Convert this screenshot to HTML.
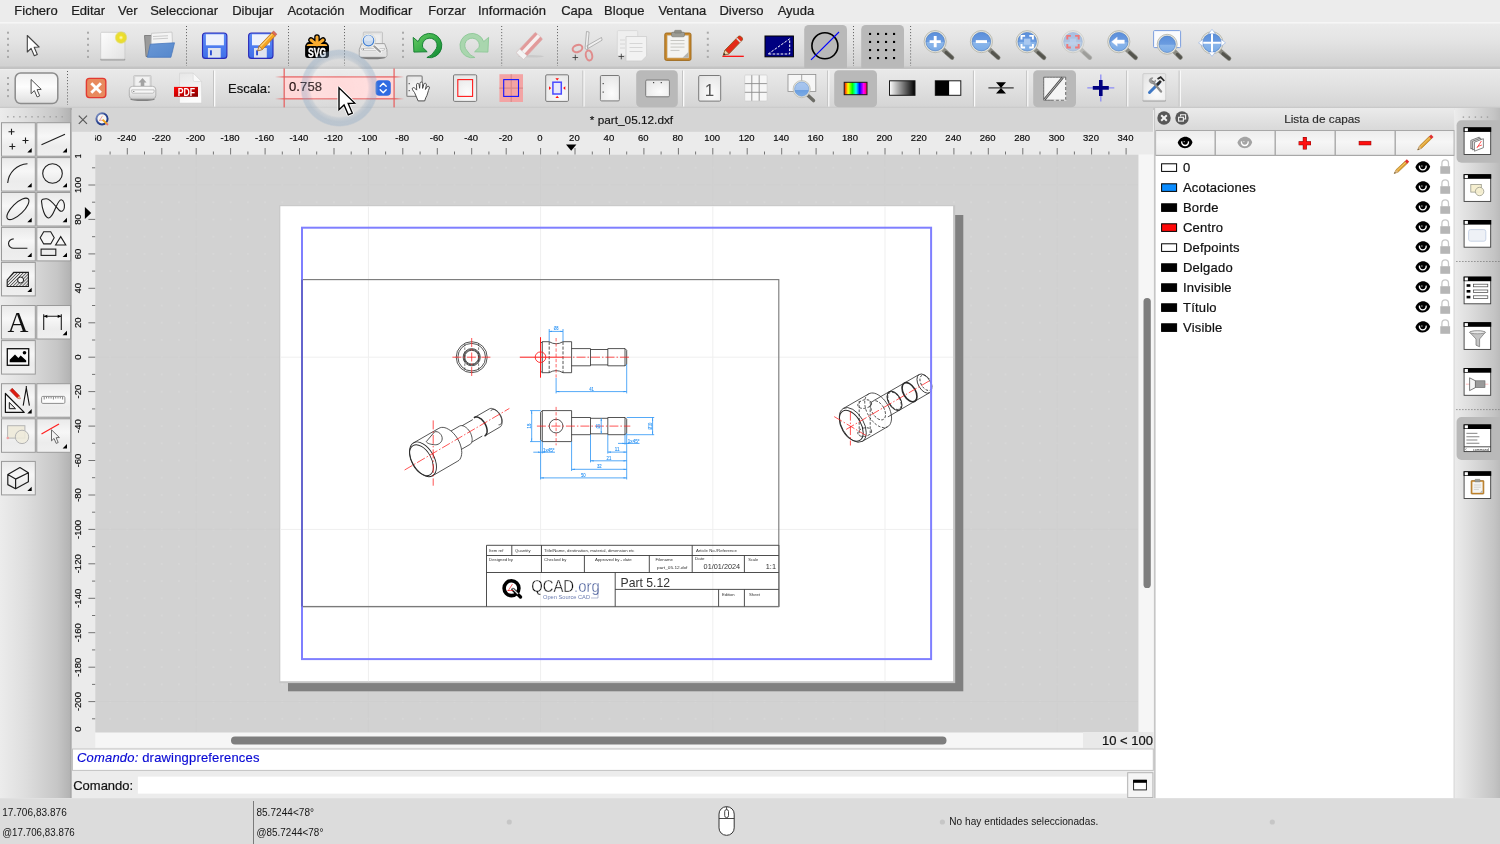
<!DOCTYPE html>
<html lang="es"><head><meta charset="utf-8"><title>QCAD - part_05.12.dxf</title>
<style>
html,body{margin:0;padding:0}
body{width:1500px;height:844px;position:relative;overflow:hidden;background:#ececec;font-family:"Liberation Sans","DejaVu Sans",sans-serif;color:#000;font-size:13px}
.abs{position:absolute}
svg{position:absolute;overflow:visible}
#menubar{position:absolute;left:0;top:0;width:1500px;height:22px;background:#ececec}
#menubar span{position:absolute;top:3px;font-size:13px;line-height:16px;color:#1e1e1e;white-space:nowrap;-webkit-text-stroke:0.22px #1e1e1e}
#tb1{position:absolute;left:0;top:22px;width:1500px;height:46px;background:linear-gradient(#ebebeb,#e4e4e4 40%,#d0d0d0)}
#tb2{position:absolute;left:0;top:68px;width:1500px;height:40px;background:linear-gradient(#f1f1f1,#e9e9e9 1.5px,#e2e2e2 40%,#d4d4d4);border-top:1px solid #c3c3c3;box-sizing:border-box}

#menubar,svg{will-change:transform}

</style></head>
<body>
<!-- menubar -->
<div id="menubar"><span style="left:14.3px">Fichero</span><span style="left:71.2px">Editar</span><span style="left:118.0px">Ver</span><span style="left:150.2px">Seleccionar</span><span style="left:232.2px">Dibujar</span><span style="left:287.4px">Acotación</span><span style="left:359.6px">Modificar</span><span style="left:428.2px">Forzar</span><span style="left:478.0px">Información</span><span style="left:561.2px">Capa</span><span style="left:604.1px">Bloque</span><span style="left:658.4px">Ventana</span><span style="left:719.4px">Diverso</span><span style="left:777.7px">Ayuda</span></div>
<!-- toolbar1 -->
<div id="tb1"></div><svg width="1500" height="68" viewBox="0 0 1500 68" style="left:0;top:0" font-family="'Liberation Sans',sans-serif"><defs><linearGradient id="lensg" x1="0" y1="0" x2="0" y2="1"><stop offset="0" stop-color="#5b8fdb"/><stop offset="0.5" stop-color="#6b9ce0"/><stop offset="0.55" stop-color="#8bb6ea"/><stop offset="1" stop-color="#79aae6"/></linearGradient><linearGradient id="paperg" x1="0" y1="0" x2="1" y2="1"><stop offset="0" stop-color="#fdfdfd"/><stop offset="1" stop-color="#e3e3e3"/></linearGradient><radialGradient id="glow"><stop offset="0" stop-color="#fffbd0"/><stop offset="0.35" stop-color="#f0e020"/><stop offset="0.75" stop-color="#e4d820" stop-opacity="0.85"/><stop offset="1" stop-color="#e4d820" stop-opacity="0"/></radialGradient><linearGradient id="bluef" x1="0" y1="0" x2="1" y2="1"><stop offset="0" stop-color="#6a98d6"/><stop offset="1" stop-color="#5587cc"/></linearGradient><linearGradient id="saveg" x1="0" y1="0" x2="0" y2="1"><stop offset="0" stop-color="#5f8cf8"/><stop offset="1" stop-color="#3f6fe8"/></linearGradient><linearGradient id="greeng" x1="0" y1="0" x2="1" y2="1"><stop offset="0" stop-color="#6ccc66"/><stop offset="0.5" stop-color="#36ac48"/><stop offset="1" stop-color="#108a34"/></linearGradient><filter id="nf1" x="-0.1" y="-0.1" width="1.2" height="1.2"><feOffset dx="0" dy="0"/></filter></defs><rect x="0" y="22" width="1500" height="1.6" fill="#f6f6f6"/><rect x="0" y="66.6" width="1500" height="1.4" fill="#c4c4c4"/><rect x="7.0" y="31.7" width="2" height="2" fill="#a9a9a9"/><rect x="7.0" y="37.8" width="2" height="2" fill="#a9a9a9"/><rect x="7.0" y="43.8" width="2" height="2" fill="#a9a9a9"/><rect x="7.0" y="49.9" width="2" height="2" fill="#a9a9a9"/><rect x="7.0" y="55.9" width="2" height="2" fill="#a9a9a9"/><rect x="87.0" y="31.7" width="2" height="2" fill="#a9a9a9"/><rect x="87.0" y="37.8" width="2" height="2" fill="#a9a9a9"/><rect x="87.0" y="43.8" width="2" height="2" fill="#a9a9a9"/><rect x="87.0" y="49.9" width="2" height="2" fill="#a9a9a9"/><rect x="87.0" y="55.9" width="2" height="2" fill="#a9a9a9"/><rect x="402.0" y="31.7" width="2" height="2" fill="#a9a9a9"/><rect x="402.0" y="37.8" width="2" height="2" fill="#a9a9a9"/><rect x="402.0" y="43.8" width="2" height="2" fill="#a9a9a9"/><rect x="402.0" y="49.9" width="2" height="2" fill="#a9a9a9"/><rect x="402.0" y="55.9" width="2" height="2" fill="#a9a9a9"/><rect x="706.8" y="31.7" width="2" height="2" fill="#a9a9a9"/><rect x="706.8" y="37.8" width="2" height="2" fill="#a9a9a9"/><rect x="706.8" y="43.8" width="2" height="2" fill="#a9a9a9"/><rect x="706.8" y="49.9" width="2" height="2" fill="#a9a9a9"/><rect x="706.8" y="55.9" width="2" height="2" fill="#a9a9a9"/><path d="M186.5 26.0V66.0" stroke="#5a5a5a" stroke-width="1" stroke-dasharray="1 2.05" fill="none"/><path d="M288.5 26.0V66.0" stroke="#5a5a5a" stroke-width="1" stroke-dasharray="1 2.05" fill="none"/><path d="M344.5 26.0V66.0" stroke="#5a5a5a" stroke-width="1" stroke-dasharray="1 2.05" fill="none"/><path d="M501.7 26.0V66.0" stroke="#5a5a5a" stroke-width="1" stroke-dasharray="1 2.05" fill="none"/><path d="M557.5 26.0V66.0" stroke="#5a5a5a" stroke-width="1" stroke-dasharray="1 2.05" fill="none"/><path d="M853.5 26.0V66.0" stroke="#5a5a5a" stroke-width="1" stroke-dasharray="1 2.05" fill="none"/><path d="M910.6 26.0V66.0" stroke="#5a5a5a" stroke-width="1" stroke-dasharray="1 2.05" fill="none"/><path transform="translate(27.3 35.5) scale(1.000)" d="M0 0V16.5L3.8 12.9L7 20.3L10 19L6.9 11.8L11.8 11.5z" fill="#fff" stroke="#444" stroke-width="1.10" stroke-linejoin="round"/><rect x="100.3" y="58.6" width="25" height="1.8" rx="0.9" fill="#9a9a9a"/><rect x="100.7" y="32.3" width="24.2" height="26.8" rx="1" fill="url(#paperg)" stroke="#c9c9c9" stroke-width="0.8"/><circle cx="121" cy="37.6" r="6.6" fill="url(#glow)"/><path d="M144.5 35.5h7l1.5 2h16v19h-23z" fill="#9a9a9a" stroke="#707070" stroke-width="0.8"/><path d="M151.5 33.3l20.5-1.2 0.8 20-22 2z" fill="#f4f4f4" stroke="#bdbdbd" stroke-width="0.7"/><path d="M153 36.5l15-0.8M153 39l15-0.8" stroke="#c9c9c9" stroke-width="1.1"/><path d="M150.3 44.2l24.2-1.4-3.6 14.5h-23.6z" fill="url(#bluef)" stroke="#4a78bd" stroke-width="0.8" stroke-linejoin="round"/><rect x="202.5" y="33" width="24.4" height="25.4" rx="3" fill="url(#saveg)" stroke="#2b2bb8" stroke-width="1.1"/><rect x="205.9" y="34.3" width="18" height="11" fill="#eef2fc"/><rect x="207.9" y="48" width="12.8" height="9.6" fill="#dfe3ee"/><rect x="210.1" y="50.3" width="1.7" height="5" fill="#1c3fd0"/><rect x="248.6" y="33" width="24.4" height="25.4" rx="3" fill="url(#saveg)" stroke="#2b2bb8" stroke-width="1.1"/><rect x="252.0" y="34.3" width="18" height="11" fill="#eef2fc"/><rect x="254.0" y="48" width="12.8" height="9.6" fill="#dfe3ee"/><rect x="256.2" y="50.3" width="1.7" height="5" fill="#1c3fd0"/><path d="M257.8 50.8l1.2-4.6 13-13.6 3.4 3.2-13 13.8z" fill="#f6a421" stroke="#b86a10" stroke-width="0.7" stroke-linejoin="round"/><path d="M260.5 46.5l11.8-12.4" stroke="#fbd27a" stroke-width="1.1"/><path d="M272 32.6l1.6-1.6 3.3 3.2-1.5 1.6z" fill="#e06a5a" stroke="#a8483c" stroke-width="0.5"/><path d="M257.8 50.8l1.2-4.6 3.4 3.2z" fill="#f3dcb4" stroke="#8a5a20" stroke-width="0.5"/><rect x="305.100" y="43.400" width="23.900" height="14.500" rx="3" fill="#000"/><path d="M317 44.800V37M317 44.800L311 40M317 44.800L323 40M309 44.900H325" stroke="#000" stroke-width="5.600" stroke-linecap="round" fill="none"/><path d="M317 44.800V37M317 44.800L311 40M317 44.800L323 40" stroke="#f9ab2e" stroke-width="3" stroke-linecap="round" fill="none"/><path d="M306.600 45.900q0.300-1.800 2.400-1.800h16q2.100 0 2.400 1.800z" fill="#f9ab2e"/><text x="317.100" y="56.900" font-size="13.600" font-weight="bold" fill="#fff" stroke="#fff" stroke-width="0.400" text-anchor="middle" textLength="18.200" lengthAdjust="spacingAndGlyphs" filter="url(#nf1)">SVG</text><ellipse cx="373" cy="57.500" rx="12.600" ry="1.700" fill="#6e6e6e" opacity="0.850"/><rect x="363.300" y="32.100" width="19.200" height="13.500" rx="0.800" fill="#e2e2e2" stroke="#bcbcbc" stroke-width="0.800"/><rect x="372" y="34.500" width="8.500" height="9" fill="#ededed"/><path d="M361.600 43.600H384.600L386.900 49.500V55.400Q386.900 57 385.300 57H360.900Q359.300 57 359.300 55.400V49.500z" fill="#ececec" stroke="#9a9a9a" stroke-width="0.900" stroke-linejoin="round"/><path d="M361.300 48.600H385Q385 50.400 383 50.400H363.300Q361.300 50.400 361.300 48.600z" fill="#fbfbfb" stroke="#a9a9a9" stroke-width="0.600"/><rect x="359.800" y="51.300" width="26.600" height="5.300" rx="1" fill="#e3e3e3"/><rect x="363" y="48.700" width="1" height="1" fill="#666"/><path d="M373.200 45.300l7 6.400" stroke="#fafafa" stroke-width="3.600" stroke-linecap="round"/><path d="M374.200 46.300l6 5.400" stroke="#9c9c9c" stroke-width="2" stroke-linecap="round"/><circle cx="368.500" cy="40.600" r="7" fill="#f8f8f4" stroke="#c4c4bc" stroke-width="0.600"/><circle cx="368.500" cy="40.600" r="5.300" fill="#c8d9ee" stroke="#3f7dd2" stroke-width="1.100"/><path d="M363.800 40a4.700 4.700 0 0 1 9.400 0c-3 1.200-6.400 1.200-9.400 0z" fill="#dbe6f4"/><path d="M413.200 37.400L413.900 52.100L427.200 51.800L422.700 47.400A7.300 7.300 0 1 1 434.800 50.700Q432.500 55.500 426.900 57.500A12.200 12.200 0 1 0 418.100 41.600z" fill="url(#greeng)" stroke="#0f7a2c" stroke-width="0.900" stroke-linejoin="round"/><path transform="translate(901.800 0) scale(-1 1)" d="M413.200 37.400L413.900 52.100L427.200 51.800L422.700 47.400A7.300 7.300 0 1 1 434.800 50.700Q432.500 55.500 426.900 57.500A12.200 12.200 0 1 0 418.100 41.600z" fill="#a9d6ae" stroke="#8cc796" stroke-width="0.900" stroke-linejoin="round"/><ellipse cx="531" cy="56.3" rx="13" ry="1.3" fill="#c9c9c9"/><g transform="rotate(-47 530 45)"><rect x="515" y="40.2" width="28" height="10" rx="1" fill="#e29a9a" stroke="#d9a9a9" stroke-width="0.6"/><rect x="515" y="43.3" width="28" height="3.6" fill="#f6f0f0"/><rect x="515" y="40.2" width="5" height="10" fill="#f4f4f4" stroke="#cfcfcf" stroke-width="0.5"/></g><path d="M586.5 31.5l2.6 0.5-1.6 18-2.4-1.5zM601.5 37.5l0.6 2.7-14 8.2-1.2-2.6z" fill="#f0f0f0" stroke="#9a9a9a" stroke-width="0.7"/><ellipse cx="577.5" cy="48.5" rx="5" ry="3.4" transform="rotate(-20 577.5 48.5)" fill="none" stroke="#e08c8c" stroke-width="2"/><ellipse cx="589" cy="55.5" rx="3.2" ry="5" transform="rotate(-12 589 55.5)" fill="none" stroke="#e08c8c" stroke-width="2"/><path d="M572.5 57.5h5.6M575.3 54.7v5.6" stroke="#333" stroke-width="0.8"/><rect x="617.3" y="30.6" width="20.4" height="25" rx="1" fill="#efefef" stroke="#d4d4d4" stroke-width="0.8"/><path d="M626 36.5h20.6v19.5l-5 5h-15.6z" fill="#f2f2f2" stroke="#cdcdcd" stroke-width="0.8"/><path d="M629.5 43.5h13M629.5 47.5h13M629.5 51.5h13M620 40h5M620 44h5M620 48h5" stroke="#d6d6d6" stroke-width="1"/><path d="M618.5 56.5h5.6M621.3 53.7v5.6" stroke="#333" stroke-width="0.8"/><rect x="664.8" y="33" width="26.2" height="27.4" rx="1.6" fill="#c98a2e" stroke="#9a6417" stroke-width="0.9"/><path d="M667.4 35.6h21v22.2h-21z" fill="#f4f4f2" stroke="#d8d8d4" stroke-width="0.5"/><path d="M682.5 57.8l5.9-5.9v5.9z" fill="#b4b4b0"/><path d="M670.5 40.5h14M670.5 43.8h14M670.5 47.1h14M670.5 50.4h9" stroke="#c6c6c2" stroke-width="1"/><rect x="671.5" y="32.2" width="13" height="4.6" rx="1.4" fill="#9c9c94" stroke="#74746c" stroke-width="0.6"/><rect x="674.5" y="30.3" width="7" height="2.8" rx="1" fill="#8e8e86" stroke="#74746c" stroke-width="0.5"/><path d="M722.4 56.3h21.4" stroke="#ff0000" stroke-width="1.2"/><path d="M723.3 55.2l1.8-5.2 13.2-13.6c1.6-1.5 5.4 1.6 4 3.7l-13.3 13.7z" fill="#e42a18" stroke="#8a4a10" stroke-width="0.8" stroke-linejoin="round"/><path d="M723.3 55.2l1.8-5.2 4 3.8z" fill="#f0d4a8" stroke="#6a4a20" stroke-width="0.5"/><path d="M736.6 38.3l3.9 3.8" stroke="#d9d9d9" stroke-width="1.6"/><path d="M723.3 55.2l0.8-2.2 1.5 1.5z" fill="#222"/><rect x="765" y="36" width="28.4" height="20.8" fill="#000080" stroke="#000" stroke-width="1"/><path d="M768.2 54l21.5-15.2v15.2z" fill="none" stroke="#fff" stroke-width="1" stroke-dasharray="2.6 1.4"/><rect x="804.2" y="25" width="42.8" height="46" rx="4.5" fill="#b9b9b9"/><rect x="861.2" y="25" width="42.8" height="46" rx="4.5" fill="#b9b9b9"/><circle cx="824.9" cy="45.8" r="13" fill="none" stroke="#000" stroke-width="1.6"/><path d="M811 59.8L839 32" stroke="#0000ff" stroke-width="1.1"/><rect x="869.0" y="32.9" width="2.1" height="2.1" fill="#000"/><rect x="869.0" y="40.9" width="2.1" height="2.1" fill="#000"/><rect x="869.0" y="49.0" width="2.1" height="2.1" fill="#000"/><rect x="869.0" y="57.0" width="2.1" height="2.1" fill="#000"/><rect x="877.0" y="32.9" width="2.1" height="2.1" fill="#000"/><rect x="877.0" y="40.9" width="2.1" height="2.1" fill="#000"/><rect x="877.0" y="49.0" width="2.1" height="2.1" fill="#000"/><rect x="877.0" y="57.0" width="2.1" height="2.1" fill="#000"/><rect x="885.0" y="32.9" width="2.1" height="2.1" fill="#000"/><rect x="885.0" y="40.9" width="2.1" height="2.1" fill="#000"/><rect x="885.0" y="49.0" width="2.1" height="2.1" fill="#000"/><rect x="885.0" y="57.0" width="2.1" height="2.1" fill="#000"/><rect x="893.0" y="32.9" width="2.1" height="2.1" fill="#000"/><rect x="893.0" y="40.9" width="2.1" height="2.1" fill="#000"/><rect x="893.0" y="49.0" width="2.1" height="2.1" fill="#000"/><rect x="893.0" y="57.0" width="2.1" height="2.1" fill="#000"/><g opacity="1.0"><path d="M942.6 49.0L952.0 57.6" stroke="#8a8a82" stroke-width="4.6" stroke-linecap="round"/><path d="M946.1 52.5L952.0 57.6" stroke="#55554e" stroke-width="3.2" stroke-linecap="round"/><circle cx="935.2" cy="41.6" r="11.1" fill="#e6e6de" stroke="#b0b0a6" stroke-width="0.8"/><circle cx="935.2" cy="41.6" r="9.3" fill="url(#lensg)" stroke="#4477c0" stroke-width="0.6"/></g><path d="M929.6 41.6h11.2M935.2 36v11.2" stroke="#fff" stroke-width="2.9"/><g opacity="1.0"><path d="M988.8 49.0L998.2 57.6" stroke="#8a8a82" stroke-width="4.6" stroke-linecap="round"/><path d="M992.3 52.5L998.2 57.6" stroke="#55554e" stroke-width="3.2" stroke-linecap="round"/><circle cx="981.4" cy="41.6" r="11.1" fill="#e6e6de" stroke="#b0b0a6" stroke-width="0.8"/><circle cx="981.4" cy="41.6" r="9.3" fill="url(#lensg)" stroke="#4477c0" stroke-width="0.6"/></g><path d="M975.8 41.6h11.2" stroke="#fff" stroke-width="2.9"/><g opacity="1.0"><path d="M1034.6 49.1L1044.0 57.7" stroke="#8a8a82" stroke-width="4.6" stroke-linecap="round"/><path d="M1038.1 52.6L1044.0 57.7" stroke="#55554e" stroke-width="3.2" stroke-linecap="round"/><circle cx="1027.2" cy="41.7" r="11.1" fill="#e6e6de" stroke="#b0b0a6" stroke-width="0.8"/><circle cx="1027.2" cy="41.7" r="9.3" fill="url(#lensg)" stroke="#4477c0" stroke-width="0.6"/></g><path d="M1021.5 39.5v-3.6h3.6M1029.3 35.9h3.6v3.6M1032.9 43.9v3.6h-3.6M1025.1 47.5h-3.6v-3.6" stroke="#fff" stroke-width="1.9" fill="none"/><rect x="1024" y="38.6" width="6.4" height="6.2" fill="#a9c8f0"/><g opacity="0.45"><path d="M1080.4 49.1L1089.8 57.7" stroke="#8a8a82" stroke-width="4.6" stroke-linecap="round"/><path d="M1083.9 52.6L1089.8 57.7" stroke="#55554e" stroke-width="3.2" stroke-linecap="round"/><circle cx="1073.0" cy="41.7" r="11.1" fill="#e6e6de" stroke="#b0b0a6" stroke-width="0.8"/><circle cx="1073.0" cy="41.7" r="9.3" fill="url(#lensg)" stroke="#4477c0" stroke-width="0.6"/></g><path d="M1067.3 39.5v-3.6h3.6M1075.1 35.9h3.6v3.6M1078.7 43.9v3.6h-3.6M1070.9 47.5h-3.6v-3.6" stroke="#f07878" stroke-width="1.9" fill="none"/><rect x="1069.8" y="38.6" width="6.4" height="6.2" fill="#bdd2ee" opacity="0.7"/><g opacity="1.0"><path d="M1126.2 49.1L1135.6 57.7" stroke="#8a8a82" stroke-width="4.6" stroke-linecap="round"/><path d="M1129.7 52.6L1135.6 57.7" stroke="#55554e" stroke-width="3.2" stroke-linecap="round"/><circle cx="1118.8" cy="41.7" r="11.1" fill="#e6e6de" stroke="#b0b0a6" stroke-width="0.8"/><circle cx="1118.8" cy="41.7" r="9.3" fill="url(#lensg)" stroke="#4477c0" stroke-width="0.6"/></g><path d="M1111.6 41.7l5.6-4.6v2.8h7.2v3.6h-7.2v2.8z" fill="#fff" stroke="#e8eefc" stroke-width="0.4"/><rect x="1153.6" y="30.6" width="27" height="17" rx="1" fill="#fbfbfd" stroke="#6f95dc" stroke-width="0.9"/><g opacity="1.0"><path d="M1173.8 50.9L1180.5 57.5" stroke="#8a8a82" stroke-width="4.6" stroke-linecap="round"/><path d="M1177.3 54.4L1180.5 57.5" stroke="#55554e" stroke-width="3.2" stroke-linecap="round"/><circle cx="1167.2" cy="44.3" r="10.0" fill="#e6e6de" stroke="#b0b0a6" stroke-width="0.8"/><circle cx="1167.2" cy="44.3" r="8.2" fill="url(#lensg)" stroke="#4477c0" stroke-width="0.6"/></g><g opacity="1.0"><path d="M1219.4 50.2L1229.0 58.5" stroke="#8a8a82" stroke-width="4.6" stroke-linecap="round"/><path d="M1222.9 53.7L1229.0 58.5" stroke="#55554e" stroke-width="3.2" stroke-linecap="round"/><circle cx="1212.0" cy="42.8" r="11.1" fill="#e6e6de" stroke="#b0b0a6" stroke-width="0.8"/><circle cx="1212.0" cy="42.8" r="9.3" fill="url(#lensg)" stroke="#4477c0" stroke-width="0.6"/></g><path d="M1212 31v23.6M1200.2 42.8h23.6" stroke="#fff" stroke-width="2"/><path d="M1212 29.3l3.4 4.4h-6.8zM1212 56.3l3.4-4.4h-6.8zM1198.5 42.8l4.4-3.4v6.8zM1225.5 42.8l-4.4-3.4v6.8z" fill="#fff" stroke="#7da2e0" stroke-width="0.5"/></svg>
<!-- toolbar2 -->
<div id="tb2"></div><svg width="1500" height="44" viewBox="0 66 1500 44" style="left:0;top:66px" font-family="'Liberation Sans',sans-serif"><defs><radialGradient id="pg2" cx="0.6" cy="0.7" r="0.9"><stop offset="0" stop-color="#fcfcfc"/><stop offset="1" stop-color="#e2e2e2"/></radialGradient><linearGradient id="btng" x1="0" y1="0" x2="0" y2="1"><stop offset="0" stop-color="#f0f0f0"/><stop offset="0.45" stop-color="#fdfdfd"/><stop offset="1" stop-color="#dedede"/></linearGradient><linearGradient id="rainbow" x1="0" y1="0" x2="1" y2="0"><stop offset="0" stop-color="#ff0000"/><stop offset="0.17" stop-color="#ffff00"/><stop offset="0.36" stop-color="#00ff00"/><stop offset="0.52" stop-color="#00ffff"/><stop offset="0.68" stop-color="#0000ff"/><stop offset="0.85" stop-color="#ff00ff"/><stop offset="1" stop-color="#ff0040"/></linearGradient><linearGradient id="grayg" x1="0" y1="0" x2="1" y2="0"><stop offset="0" stop-color="#fff"/><stop offset="1" stop-color="#000"/></linearGradient><linearGradient id="pdfg" x1="0" y1="0" x2="0" y2="1"><stop offset="0" stop-color="#e01010"/><stop offset="1" stop-color="#8a0000"/></linearGradient></defs><rect x="0" y="106.8" width="1500" height="3.2" fill="#c9c9c9"/><rect x="7.0" y="77.0" width="2" height="2" fill="#a9a9a9"/><rect x="7.0" y="83.0" width="2" height="2" fill="#a9a9a9"/><rect x="7.0" y="89.1" width="2" height="2" fill="#a9a9a9"/><rect x="7.0" y="95.1" width="2" height="2" fill="#a9a9a9"/><path d="M67.5 71.0V105.0" stroke="#5a5a5a" stroke-width="1" stroke-dasharray="1 2.05" fill="none"/><rect x="15.2" y="73" width="42.6" height="30.6" rx="5.5" fill="url(#btng)" stroke="#8c8c8c" stroke-width="1.5"/><path transform="translate(31.1 79.5) scale(0.860)" d="M0 0V16.5L3.8 12.9L7 20.3L10 19L6.9 11.8L11.8 11.5z" fill="#fff" stroke="#444" stroke-width="1.10" stroke-linejoin="round"/><rect x="86.4" y="78.4" width="19.4" height="19.2" rx="3" fill="#e88a5e" stroke="#e23a32" stroke-width="1.4"/><path d="M91.3 83.2l9.6 9.6M100.9 83.2l-9.6 9.6" stroke="#fff" stroke-width="2.9"/><defs><linearGradient id="prg" x1="0" y1="0" x2="0" y2="1"><stop offset="0" stop-color="#fbfbfb"/><stop offset="0.550" stop-color="#e9e9e9"/><stop offset="1" stop-color="#cdcdcd"/></linearGradient></defs><ellipse cx="142.500" cy="99.300" rx="12.300" ry="1.700" fill="#808080"/><rect x="133.700" y="75.500" width="17.400" height="12.500" rx="0.800" fill="#d9d9d9" stroke="#bdbdbd" stroke-width="0.700"/><rect x="135.300" y="77" width="14.200" height="10" fill="#f1f1f1"/><path d="M142.500 77.900l4 4.500h-2.200v3.600h-3.600v-3.600h-2.200z" fill="#a2a2a2"/><rect x="129.300" y="86.300" width="26.500" height="12.700" rx="3.400" fill="url(#prg)" stroke="#a4a4a4" stroke-width="0.800"/><path d="M131.700 89.900h22.400v1.700q0 1.600-1.600 1.600h-19.200q-1.600 0-1.600-1.600z" fill="#f7f7f7" stroke="#9c9c9c" stroke-width="0.600"/><rect x="133" y="91" width="1.400" height="0.800" fill="#777"/><defs><linearGradient id="pdfpg" x1="0" y1="0" x2="0.300" y2="1"><stop offset="0" stop-color="#e6e6e6"/><stop offset="1" stop-color="#fcfcfc"/></linearGradient><linearGradient id="pdfg2" x1="0" y1="0" x2="1" y2="1"><stop offset="0" stop-color="#ff0808"/><stop offset="0.500" stop-color="#c80000"/><stop offset="1" stop-color="#7e0000"/></linearGradient></defs><path d="M179.500 73.100h13.700l8.400 8.400v21.600h-22.100z" fill="url(#pdfpg)" stroke="#d2d2d2" stroke-width="0.600"/><path d="M193.200 73.100l8.400 8.400h-7q-1.400 0-1.400-1.400z" fill="#f9f9f9" stroke="#cfcfcf" stroke-width="0.500"/><rect x="174" y="86.900" width="24" height="9.900" fill="url(#pdfg2)"/><text x="186.400" y="95.900" font-size="10.900" font-weight="bold" fill="#fff" text-anchor="middle" textLength="17.300" lengthAdjust="spacingAndGlyphs">PDF</text><rect x="214.0" y="70.500" width="1.300" height="36" fill="#fbfbfb"/><rect x="213.0" y="70.500" width="1" height="36" fill="#c4c4c4"/><text x="228" y="93.300" font-size="13" fill="#111" stroke="#111" stroke-width="0.200">Escala:</text><rect x="285" y="77.200" width="108.600" height="21.400" rx="4" fill="#ffd8d8"/><defs><linearGradient id="redfade" gradientUnits="userSpaceOnUse" x1="275" y1="0" x2="404" y2="0"><stop offset="0" stop-color="#e85a5a" stop-opacity="0"/><stop offset="0.070" stop-color="#e85a5a"/><stop offset="0.930" stop-color="#e85a5a"/><stop offset="1" stop-color="#e85a5a" stop-opacity="0"/></linearGradient></defs><rect x="275" y="76.200" width="129" height="1.400" fill="url(#redfade)" opacity="0.850"/><rect x="275" y="98.100" width="129" height="1.400" fill="url(#redfade)" opacity="0.850"/><path d="M284.200 68.500V107.600M394.100 68.500V107.600" stroke="#e85a5a" stroke-width="1.400" opacity="0.850"/><rect x="375.600" y="80.200" width="15.200" height="15.500" rx="3.800" fill="#2f6be2"/><path d="M380.200 86.300l3-3 3 3M380.200 89.700l3 3 3-3" stroke="#fff" stroke-width="1.400" fill="none" stroke-linecap="round" stroke-linejoin="round"/><text x="288.900" y="91" font-size="13" fill="#241010" stroke="#241010" stroke-width="0.200" letter-spacing="0.150">0.758</text><rect x="406.8" y="75.8" width="15.4" height="20.6" rx="1.2" fill="url(#pg2)" stroke="#8a8a8a" stroke-width="1.300"/><rect x="408.6" y="83" width="1.2" height="1.2" fill="#555"/><rect x="408.6" y="90" width="1.2" height="1.2" fill="#555"/><path d="M414.5 92.5c-1.5-2-3-3.6-1.8-4.6 1.3-0.9 2.6 0.6 4 2.2l-0.2-5.4c0-1.7 2.4-1.8 2.6 0l0.5 3.6 0.4-5c0.2-1.8 2.6-1.7 2.7 0.1l-0.1 5 1.3-4.2c0.6-1.6 2.8-1 2.5 0.7l-1 4.6 1.7-2.6c0.9-1.4 2.9-0.4 2.2 1.2-1.5 3.4-1.6 6.6-3.6 9.8l-1 3h-6.600z" fill="#fff" stroke="#3a3a3a" stroke-width="0.9" stroke-linejoin="round"/><rect x="453.5" y="74.8" width="23.2" height="26.6" rx="1.2" fill="url(#pg2)" stroke="#7a7a7a" stroke-width="1"/><rect x="457.8" y="79.6" width="14.8" height="16.8" fill="none" stroke="#ff1a1a" stroke-width="1.1"/><rect x="499.4" y="74.2" width="23.6" height="27.8" fill="#f3a4a4"/><path d="M511.2 74.2v27.800M499.4 88.1h23.600" stroke="#d98a8a" stroke-width="1.2"/><rect x="503.700" y="79.6" width="14.8" height="16.8" fill="none" stroke="#1414ff" stroke-width="1.1"/><rect x="545.7" y="74.8" width="22.8" height="26.6" rx="1.2" fill="url(#pg2)" stroke="#7a7a7a" stroke-width="1"/><rect x="552.9" y="82.2" width="8.4" height="11.8" fill="#e9e9fb" stroke="#4a4aff" stroke-width="1.5"/><path d="M555.400 78.300h3.600l-1.800 2.200zM555.400 97.900h3.600l-1.800-2.200zM549 86.300v3.600l2.200-1.800zM565.300 86.300v3.600l-2.200-1.800z" fill="#ff1010"/><rect x="583.3" y="70.500" width="1.300" height="36" fill="#fbfbfb"/><rect x="582.3" y="70.500" width="1" height="36" fill="#c4c4c4"/><rect x="600.4" y="75.5" width="19.0" height="25.4" rx="1.2" fill="url(#pg2)" stroke="#7a7a7a" stroke-width="1"/><rect x="602.6" y="83" width="1.2" height="1.2" fill="#444"/><rect x="602.6" y="91.500" width="1.2" height="1.2" fill="#444"/><rect x="636.2" y="70.2" width="41.6" height="37" rx="4.5" fill="#b9b9b9"/><rect x="645.7" y="80.0" width="23.7" height="16.8" rx="1.2" fill="url(#pg2)" stroke="#7a7a7a" stroke-width="1"/><rect x="653" y="82" width="1.2" height="1.2" fill="#444"/><rect x="660.700" y="82" width="1.2" height="1.2" fill="#444"/><rect x="683.0" y="70.500" width="1.300" height="36" fill="#fbfbfb"/><rect x="682.0" y="70.500" width="1" height="36" fill="#c4c4c4"/><rect x="698.7" y="75.5" width="22.0" height="25.6" rx="1.2" fill="url(#pg2)" stroke="#7a7a7a" stroke-width="1"/><text x="709.600" y="95.600" font-size="17" fill="#555" text-anchor="middle">1</text><rect x="744.7" y="75" width="22.4" height="26" rx="1" fill="#f6f6f6"/><path d="M751.800 75v26M759.200 75v26M744.700 83.600h22.400M744.700 92.300h22.400" stroke="#8c8c8c" stroke-width="0.9"/><rect x="744.7" y="75" width="22.400" height="26" rx="1" fill="none" stroke="#c9c9c9" stroke-width="0.6"/><rect x="788" y="74.6" width="27.800" height="17" fill="#f6f6f6" stroke="#8e8e8e" stroke-width="0.8"/><path d="M801.700 74.600v17" stroke="#8e8e8e" stroke-width="0.8"/><defs><linearGradient id="lensg2" x1="0" y1="0" x2="0" y2="1"><stop offset="0" stop-color="#a9c6ee"/><stop offset="0.55" stop-color="#9fc0ec"/><stop offset="0.6" stop-color="#6a9ee0"/><stop offset="1" stop-color="#7cacE6"/></linearGradient></defs><path d="M807.500 95l6 5.600" stroke="#6c6c66" stroke-width="3.400" stroke-linecap="round"/><circle cx="801.700" cy="89.100" r="8.600" fill="#e4e4dc" stroke="#b4b4aa" stroke-width="0.700"/><circle cx="801.700" cy="89.100" r="7.100" fill="url(#lensg2)" stroke="#5c8cd0" stroke-width="0.500"/><rect x="828.1" y="70.500" width="1.300" height="36" fill="#fbfbfb"/><rect x="827.1" y="70.500" width="1" height="36" fill="#c4c4c4"/><rect x="834.2" y="70.2" width="42.8" height="37" rx="4.5" fill="#b9b9b9"/><rect x="844.200" y="82.300" width="22.800" height="12.400" fill="url(#rainbow)" stroke="#1a1a1a" stroke-width="1"/><rect x="889.500" y="80.800" width="25.500" height="14.500" fill="url(#grayg)" stroke="#1a1a1a" stroke-width="1"/><rect x="935.300" y="80.800" width="25.500" height="14.500" fill="#fff" stroke="#1a1a1a" stroke-width="1"/><rect x="935.300" y="80.800" width="13.800" height="14.500" fill="#000"/><rect x="973.9" y="70.500" width="1.300" height="36" fill="#fbfbfb"/><rect x="972.9" y="70.500" width="1" height="36" fill="#c4c4c4"/><path d="M988.400 87.900h25.300" stroke="#222" stroke-width="1.100"/><path d="M996 82.200h10l-5 5.700zM996 93.600h10l-5-5.700z" fill="#000"/><rect x="1027.1" y="70.500" width="1.300" height="36" fill="#fbfbfb"/><rect x="1026.1" y="70.500" width="1" height="36" fill="#c4c4c4"/><rect x="1033.2" y="70.2" width="42.800" height="37" rx="4.500" fill="#b9b9b9"/><rect x="1043.700" y="77.200" width="22" height="23" fill="#f4f4f4" stroke="#6a6a6a" stroke-width="1" stroke-dasharray="3 0"/><path d="M1065.700 80v20.200h-12" stroke="#f4f4f4" stroke-width="1.200" stroke-dasharray="2 3" fill="none"/><path d="M1044.500 99.500l18.200-22" stroke="#4a4a4a" stroke-width="2.600"/><path d="M1044.500 99.500l18.200-22" stroke="#e9e9e9" stroke-width="0.700"/><path d="M1087.300 87.900h27M1100.800 74.400v27" stroke="#8c8cf6" stroke-width="1.300"/><path d="M1092.800 87.900h16M1100.800 79.900v16" stroke="#000080" stroke-width="3.600"/><rect x="1127.1" y="70.500" width="1.300" height="36" fill="#fbfbfb"/><rect x="1126.1" y="70.500" width="1" height="36" fill="#c4c4c4"/><rect x="1142.600" y="99.600" width="23.400" height="2" rx="1" fill="#9a9a9a"/><rect x="1142.900" y="73.600" width="22.800" height="26.800" rx="1" fill="url(#pg2)" stroke="#c4c4c4" stroke-width="0.700"/><path d="M1149.500 92.500l9.500-9.500" stroke="#3f78c4" stroke-width="3" stroke-linecap="round"/><path d="M1156.500 85.500l4.400-4.600" stroke="#2b2b2b" stroke-width="2.600"/><path d="M1152.500 81.500l8.500 10" stroke="#8c8c8c" stroke-width="2.400" stroke-linecap="round"/><path d="M1149.200 80.600c0-2 2-3.400 3.800-2.800l-1.600 2 0.600 1.600 2 0.300 1.400-1.800c0.800 2-1 4-3 3.800-1.800-0.200-3.200-1.400-3.200-3.100z" fill="#9a9a9a" stroke="#6a6a6a" stroke-width="0.400"/><path d="M1157.500 79l3.200-1.800 3.600 3.800" stroke="#2b2b2b" stroke-width="1.800" fill="none"/><rect x="1179.6" y="70.500" width="1.300" height="36" fill="#fbfbfb"/><rect x="1178.6" y="70.500" width="1" height="36" fill="#c4c4c4"/></svg>
<!-- lefttools -->
<svg width="73" height="692" viewBox="0 108 73 692" style="left:0;top:108px" font-family="'Liberation Sans',sans-serif"><defs><linearGradient id="lpg" x1="0" y1="0" x2="1" y2="0"><stop offset="0" stop-color="#ececec"/><stop offset="0.35" stop-color="#dedede"/><stop offset="0.8" stop-color="#c6c6c6"/><stop offset="0.97" stop-color="#b4b4b4"/><stop offset="1" stop-color="#9c9c9c"/></linearGradient><linearGradient id="lbg" x1="0" y1="0" x2="0" y2="1"><stop offset="0" stop-color="#e9e9e9"/><stop offset="0.4" stop-color="#f7f7f7"/><stop offset="0.7" stop-color="#ececec"/><stop offset="1" stop-color="#efefef"/></linearGradient></defs><rect x="0" y="108" width="71.6" height="690" fill="url(#lpg)"/><rect x="7.1" y="116.100" width="1.400" height="1.400" fill="#9e9e9e"/><rect x="13.1" y="116.100" width="1.400" height="1.400" fill="#9e9e9e"/><rect x="19.2" y="116.100" width="1.400" height="1.400" fill="#9e9e9e"/><rect x="25.2" y="116.100" width="1.400" height="1.400" fill="#9e9e9e"/><rect x="31.3" y="116.100" width="1.400" height="1.400" fill="#9e9e9e"/><rect x="37.4" y="116.100" width="1.400" height="1.400" fill="#9e9e9e"/><rect x="43.4" y="116.100" width="1.400" height="1.400" fill="#9e9e9e"/><rect x="49.5" y="116.100" width="1.400" height="1.400" fill="#9e9e9e"/><rect x="55.5" y="116.100" width="1.400" height="1.400" fill="#9e9e9e"/><rect x="61.5" y="116.100" width="1.400" height="1.400" fill="#9e9e9e"/><rect x="1.5" y="122.7" width="33.8" height="33.5" fill="url(#lbg)" stroke="#9a9a9a" stroke-width="1"/><path d="M31.7 152.4v-4.400l-4.400 4.400z" fill="#000"/><rect x="36.8" y="122.7" width="33.8" height="33.5" fill="url(#lbg)" stroke="#9a9a9a" stroke-width="1"/><path d="M67.0 152.4v-4.400l-4.400 4.400z" fill="#000"/><rect x="1.5" y="157.6" width="33.8" height="33.5" fill="url(#lbg)" stroke="#9a9a9a" stroke-width="1"/><path d="M31.7 187.3v-4.400l-4.400 4.400z" fill="#000"/><rect x="36.8" y="157.6" width="33.8" height="33.5" fill="url(#lbg)" stroke="#9a9a9a" stroke-width="1"/><path d="M67.0 187.3v-4.400l-4.400 4.400z" fill="#000"/><rect x="1.5" y="192.5" width="33.8" height="33.5" fill="url(#lbg)" stroke="#9a9a9a" stroke-width="1"/><path d="M31.7 222.2v-4.400l-4.400 4.400z" fill="#000"/><rect x="36.8" y="192.5" width="33.8" height="33.5" fill="url(#lbg)" stroke="#9a9a9a" stroke-width="1"/><path d="M67.0 222.2v-4.400l-4.400 4.400z" fill="#000"/><rect x="1.5" y="227.4" width="33.8" height="33.5" fill="url(#lbg)" stroke="#9a9a9a" stroke-width="1"/><path d="M31.7 257.1v-4.400l-4.400 4.400z" fill="#000"/><rect x="36.8" y="227.4" width="33.8" height="33.5" fill="url(#lbg)" stroke="#9a9a9a" stroke-width="1"/><path d="M67.0 257.1v-4.400l-4.400 4.400z" fill="#000"/><rect x="1.5" y="262.4" width="33.8" height="33.5" fill="url(#lbg)" stroke="#9a9a9a" stroke-width="1"/><path d="M31.7 292.1v-4.400l-4.400 4.400z" fill="#000"/><rect x="1.5" y="305.5" width="33.8" height="33.5" fill="url(#lbg)" stroke="#9a9a9a" stroke-width="1"/><rect x="36.8" y="305.5" width="33.8" height="33.5" fill="url(#lbg)" stroke="#9a9a9a" stroke-width="1"/><path d="M67.0 335.2v-4.400l-4.400 4.400z" fill="#000"/><rect x="1.5" y="340.6" width="33.8" height="33.5" fill="url(#lbg)" stroke="#9a9a9a" stroke-width="1"/><rect x="1.5" y="383.7" width="33.8" height="33.5" fill="url(#lbg)" stroke="#9a9a9a" stroke-width="1"/><path d="M31.7 413.4v-4.400l-4.400 4.400z" fill="#000"/><rect x="36.8" y="383.7" width="33.8" height="33.5" fill="url(#lbg)" stroke="#9a9a9a" stroke-width="1"/><rect x="1.5" y="418.8" width="33.8" height="33.5" fill="url(#lbg)" stroke="#9a9a9a" stroke-width="1"/><rect x="36.8" y="418.8" width="33.8" height="33.5" fill="url(#lbg)" stroke="#9a9a9a" stroke-width="1"/><path d="M67.0 448.5v-4.400l-4.400 4.400z" fill="#000"/><rect x="1.5" y="461.4" width="33.8" height="33.5" fill="url(#lbg)" stroke="#9a9a9a" stroke-width="1"/><path d="M31.7 491.1v-4.400l-4.400 4.400z" fill="#000"/><path d="M8.5 131.7h6.0M11.5 128.7v6.0M22.5 140.5h6.0M25.5 137.5v6.0M9.3 146.5h6.0M12.3 143.5v6.0" fill="none" stroke="#1e1e1e" stroke-width="1.1"/><path d="M41.500 144.700L65 134.300" fill="none" stroke="#1e1e1e" stroke-width="1.1"/><path d="M7.700 183A21 21 0 0 1 27.500 163.700" fill="none" stroke="#1e1e1e" stroke-width="1.1"/><circle cx="52.500" cy="173.500" r="9.800" fill="none" stroke="#1e1e1e" stroke-width="1.1"/><ellipse cx="17.900" cy="208.900" rx="14.300" ry="5.600" transform="rotate(-44 17.900 208.900)" fill="none" stroke="#1e1e1e" stroke-width="1.1"/><path d="M41.500 201.200C42 208 44.500 217 48.200 218C52 218.500 54 211 56 207C58 202.500 59.500 199.500 61.300 199.800C63.800 200.200 65 205 64.300 208C63.600 211 61.500 212.200 59.500 210.500C56.500 208 51 199 46.500 198.800C43.500 198.700 41.400 199.500 41.500 201.200z" fill="none" stroke="#1e1e1e" stroke-width="1.1"/><path d="M13.700 238.900a5.200 4.700 0 0 0 0 9.400H27.400" fill="none" stroke="#1e1e1e" stroke-width="1.1"/><polygon points="54.2,237.8 50.7,243.9 43.7,243.9 40.2,237.8 43.7,231.7 50.7,231.7" fill="none" stroke="#1e1e1e" stroke-width="1.1"/><path d="M60.700 236.600L65.800 245H55.600z" fill="none" stroke="#1e1e1e" stroke-width="1.1"/><rect x="41.100" y="249.100" width="14.700" height="6.300" fill="none" stroke="#1e1e1e" stroke-width="1.1"/><defs><pattern id="hat" width="2.200" height="2.200" patternUnits="userSpaceOnUse" patternTransform="rotate(-45)"><rect width="2.200" height="2.200" fill="#e9e9e9"/><rect width="2.200" height="0.800" fill="#555"/></pattern></defs><path d="M7.200 286.500V280L13.700 272.400H28.400V286.500z" fill="url(#hat)" stroke="#1e1e1e" stroke-width="1.100"/><circle cx="20.600" cy="280" r="3" fill="#f4f4f4" stroke="#1e1e1e" stroke-width="1"/><text x="18" y="331.700" font-family="'Liberation Serif',serif" font-size="29" text-anchor="middle" fill="#111">A</text><path d="M43.700 314.300V330M61.300 314.300V330M43.700 316.300H61.300" fill="none" stroke="#1e1e1e" stroke-width="1.1"/><path d="M43.700 316.300l3.600-1.600v3.200zM61.300 316.300l-3.600-1.600v3.200z" fill="#000"/><rect x="7.300" y="348.700" width="21.400" height="16.600" fill="#fafafa" stroke="#111" stroke-width="1.300"/><path d="M9.700 362.300v-2.500l5.300-5.300 3.400 3.400 2.300-2.300 5.500 4.800v1.900z" fill="#000"/><circle cx="24.500" cy="352.800" r="1.800" fill="#000"/><path d="M5.400 393.500V412.400H24.200z" fill="#f6f6f6" stroke="#111" stroke-width="1.200" stroke-linejoin="round"/><path d="M9.300 402.500V408.700H15.500z" fill="#e9e9e9" stroke="#111" stroke-width="1"/><path d="M10 390.500l2.200-2.200 7.200 7.400 0.800 3.200-3-1z" fill="#e01c10" stroke="#901008" stroke-width="0.600"/><path d="M19.400 395.700l0.800 3.200-3-1z" fill="#e9c9a0"/><path d="M26.300 387.800L23.200 405.600M26.300 387.800L29.400 405.600M26.300 386v4" stroke="#111" stroke-width="1.100" fill="none"/><rect x="41.600" y="396.400" width="23.300" height="7" rx="1.200" fill="#fcfcfc" stroke="#8e8e8e" stroke-width="1"/><path d="M44.2 396.900v2.6M46.5 396.900v1.6M48.8 396.900v1.6M51.1 396.900v1.6M53.4 396.900v2.6M55.7 396.900v1.6M58.0 396.900v1.6M60.3 396.900v1.6M62.6 396.900v2.6" stroke="#555" stroke-width="0.700"/><rect x="7.600" y="425.700" width="17.300" height="12.400" fill="#efebdc" stroke="#b4b4b4" stroke-width="1"/><circle cx="22" cy="436.900" r="6.700" fill="#efebdc" fill-opacity="0.850" stroke="#b4b4b4" stroke-width="1"/><circle cx="7.800" cy="438" r="1.300" fill="#f0a0a0"/><path d="M41.500 434L59 424.100" stroke="#ff2020" stroke-width="1.200"/><path transform="translate(51.5 429.8) scale(0.670)" d="M0 0V16.5L3.8 12.9L7 20.3L10 19L6.9 11.8L11.8 11.5z" fill="#f4f4f4" stroke="#555" stroke-width="1.30" stroke-linejoin="round"/><path d="M19.900 467.500L7.800 474.600V484.600L15.600 488.800L28.400 481.700V472.700zM7.800 474.600L15.600 479.100L28.400 472.700M15.600 479.100V488.800" fill="none" stroke="#1e1e1e" stroke-width="1.200" stroke-linejoin="round"/></svg>
<!-- canvas -->
<svg id="cv" width="1500" height="844" viewBox="0 0 1500 844" style="left:0;top:0" font-family="'Liberation Sans',sans-serif"><style>.dt{fill:#2a93f5;text-anchor:middle;stroke:#2a93f5;stroke-width:0.12px}.tt text{fill:#333}</style><defs><pattern id="dots" x="540.6" y="357.2" width="17.22" height="17.22" patternUnits="userSpaceOnUse"><rect x="-0.6" y="-0.6" width="1.2" height="1.2" fill="#dedede"/><rect x="16.62" y="-0.6" width="1.2" height="1.2" fill="#dedede"/><rect x="-0.6" y="16.62" width="1.2" height="1.2" fill="#dedede"/><rect x="16.62" y="16.62" width="1.2" height="1.2" fill="#dedede"/></pattern><clipPath id="cclip"><rect x="95.200" y="154.500" width="1042.800" height="577.500"/></clipPath></defs><rect x="95.200" y="154.500" width="1042.800" height="577.500" fill="#d2d2d2"/><g clip-path="url(#cclip)"><rect x="95.200" y="154.500" width="1042.800" height="577.500" fill="url(#dots)"/><path d="M196.2 154.5V732M368.4 154.5V732M540.6 154.5V732M712.8 154.5V732M885 154.5V732M1057.2 154.5V732M95.200 185H1138M95.200 357.2H1138M95.200 529.4H1138M95.200 701.6H1138" stroke="#cfcfcf" stroke-width="1" fill="none"/><rect x="288" y="215" width="675.3" height="476.3" fill="#808080"/><rect x="279.300" y="205.300" width="675.900" height="477.800" fill="#c6c6c6"/><rect x="280.3" y="206.2" width="672.8" height="475" fill="#fff"/><path d="M368.4 206.2V681.2M540.6 206.2V681.2M712.8 206.2V681.2M885 206.2V681.2M280.3 357.2H953.1M280.3 529.4H953.1" stroke="#efefef" stroke-width="1" fill="none"/></g><g clip-path="url(#cclip)"><g fill="none" stroke="#3a3a3a" stroke-width="0.9"><rect x="302" y="279.600" width="476.800" height="326.900" stroke="#7c7c7c" stroke-width="1.150"/><path d="M302 606.700H779M778.900 545V606.700" stroke="#7a7a7a" stroke-width="1.300"/><path d="M486.5 545.3H778.8M486.5 555.5H778.8M486.5 572.5H778.8M615.2 589.4H778.8M486.5 545.3V606.5M511.8 545.3V555.5M541.5 545.3V572.5M584.4 555.5V572.5M649.3 555.5V572.5M692.2 545.3V572.5M744.4 555.5V572.5M744.4 589.4V606.5M615.2 572.5V606.5M718.6 589.4V606.5"/></g><g class="tt"><text x="489.1" y="552" font-size="4.0" textLength="14.3" lengthAdjust="spacingAndGlyphs" >Item ref</text><text x="515.1" y="551.8" font-size="4.0" textLength="15.4" lengthAdjust="spacingAndGlyphs" >Quantity</text><text x="544.1" y="551.8" font-size="4.0" textLength="90.4" lengthAdjust="spacingAndGlyphs" >Title/Name, destination, material, dimension etc</text><text x="696" y="552" font-size="4.0" textLength="40.9" lengthAdjust="spacingAndGlyphs" >Article No./Reference</text><text x="489.1" y="560.8" font-size="4.0" textLength="23.8" lengthAdjust="spacingAndGlyphs" >Designed by</text><text x="544.1" y="560.8" font-size="4.0" textLength="22.2" lengthAdjust="spacingAndGlyphs" >Checked by</text><text x="595" y="560.8" font-size="4.0" textLength="36.7" lengthAdjust="spacingAndGlyphs" >Approved by - date</text><text x="655.5" y="560.8" font-size="4.0" textLength="17.4" lengthAdjust="spacingAndGlyphs" >Filename</text><text x="694.9" y="560.4" font-size="4.0" textLength="9.5" lengthAdjust="spacingAndGlyphs" >Date</text><text x="748.3" y="561.2" font-size="4.0" textLength="9.9" lengthAdjust="spacingAndGlyphs" >Scale</text><text x="657" y="568.6" font-size="4.2" textLength="30.4" lengthAdjust="spacingAndGlyphs" >part_05.12.dxf</text><text x="703.6" y="569" font-size="7.3" fill="#111">01/01/2024</text><text x="765.8" y="569.3" font-size="7.3" fill="#111">1:1</text><text x="620.6" y="586.7" font-size="12.2" fill="#000">Part 5.12</text><text x="721.9" y="595.6" font-size="4.0" textLength="12.8" lengthAdjust="spacingAndGlyphs" >Edition</text><text x="749" y="595.6" font-size="4.0" textLength="11" lengthAdjust="spacingAndGlyphs" >Sheet</text></g><g><circle cx="511.5" cy="588.2" r="7.4" fill="none" stroke="#000" stroke-width="3.6"/><path d="M513 589.5l7.5 7.5" stroke="#000" stroke-width="3.4" stroke-linecap="round"/><path d="M508 591l4.5-7M507.5 590.5h6" stroke="#e22" stroke-width="0.7" fill="none"/><path d="M512.5 588.5l5.5 5.5" stroke="#ddd" stroke-width="1.2"/><text x="531.2" y="591.8" font-size="17.2" textLength="68.5" lengthAdjust="spacingAndGlyphs" fill="#0c0c0c" stroke="#fff" stroke-width="0.34"><tspan>QCAD</tspan><tspan fill="#3f5494">.org</tspan></text><text x="543" y="599.3" font-size="5.6" textLength="47" lengthAdjust="spacingAndGlyphs" fill="#6a7bb0">Open Source CAD</text><path d="M591 598h7V588" stroke="#4d5f96" stroke-width="0.6" fill="none" opacity="0.7"/></g><g fill="none" stroke="#2a2a2a" stroke-width="0.8"><circle cx="471.7" cy="357.2" r="15.5"/><circle cx="471.7" cy="357.2" r="13.8"/><circle cx="471.7" cy="357.2" r="8.6"/><circle cx="471.7" cy="357.2" r="6.9"/><circle cx="471.7" cy="357.2" r="7.7"/><path d="M464.8 343.4V371M478.6 343.4V371" stroke-dasharray="2.5 1.5" stroke-width="0.6"/></g><g fill="none" stroke="#ff1e1e" stroke-width="0.9" stroke-opacity="0.85"><path d="M452.4 357.2L490.7 357.2" stroke-dasharray="9 2 1.5 2"/><path d="M471.7 338L471.7 377" stroke-dasharray="9 2 1.5 2"/></g><g fill="none" stroke="#2a2a2a" stroke-width="0.8"><path d="M540.6 343.4L542.3 341.7H549.2Q556.1 345.9 563 341.7H571.6V372.7H563Q556.1 368.5 549.2 372.7H542.3L540.6 371zM542.3 341.7V372.7M571.6 348.6H590.5V365.8H571.6M590.5 349.5H607.8M590.5 364.9H607.8M607.8 365.8V348.6H625L626.7 350.3V364.1L625 365.8H607.8M625 348.6V365.8"/><path d="M549.2 341.7V372.7M563 341.7V372.7" stroke-dasharray="3.2 1.6"/></g><g fill="none" stroke="#ff1e1e" stroke-width="0.9"><path d="M556.1 338L556.1 377.6" stroke-dasharray="3.4 1.8" stroke-opacity="0.75"/><path d="M562 357.2L630.5 357.2" stroke-dasharray="9 2 1.5 2" stroke-opacity="0.85"/><path d="M519.8 357.2L562.5 357.2" stroke-width="1"/><path d="M540.5 337.2L540.5 377.7" stroke-width="1"/><circle cx="540.5" cy="357.2" r="5.3" stroke-width="0.9"/></g><g fill="none" stroke="#2a93f5" stroke-width="0.8"><path d="M549.2 341.2L549.2 329" /><path d="M563 341.2L563 329" /><path d="M549.2 331.4L563 331.4" /><path d="M549.2 331.4L551.8 330.8L551.8 331.9z" fill="#2a93f5" stroke="none"/><path d="M563 331.4L560.4 331.9L560.4 330.8z" fill="#2a93f5" stroke="none"/><path d="M556.1 378L556.1 393.4" /><path d="M626.7 364.1L626.7 393.4" /><path d="M556.1 391.6L626.7 391.6" /><path d="M556.1 391.6L559.3 391.1L559.3 392.2z" fill="#2a93f5" stroke="none"/><path d="M626.7 391.6L623.5 392.2L623.5 391.1z" fill="#2a93f5" stroke="none"/></g><text x="556.1" y="330.4" class="dt" textLength="4.7" lengthAdjust="spacingAndGlyphs" font-size="5.3">Ø8</text><text x="591.6" y="390.6" class="dt" textLength="4.7" lengthAdjust="spacingAndGlyphs" font-size="5.3">41</text><g fill="none" stroke="#2a2a2a" stroke-width="0.8"><path d="M540.6 412.3L542.3 410.6H571.6V441.6H542.3L540.6 439.9zM542.3 410.6V441.6M571.6 417.5H590.5V434.7H571.6M590.5 418.3H607.8M590.5 433.8H607.8M607.8 434.7V417.5H625L626.7 419.2V433L625 434.7H607.8M625 417.5V434.7"/><circle cx="556.1" cy="426.1" r="6.85"/></g><g fill="none" stroke="#ff1e1e" stroke-width="0.9"><path d="M536.9 426.1L630.3 426.1" stroke-dasharray="9 2 1.5 2" stroke-opacity="0.85"/><path d="M556.1 406.9L556.1 445.3" stroke-dasharray="3.4 1.8" stroke-opacity="0.75"/></g><g fill="none" stroke="#2a93f5" stroke-width="0.8"><path d="M540.6 410.6L530 410.6" /><path d="M540.6 441.6L530 441.6" /><path d="M531.7 410.6L531.7 441.6" /><path d="M531.7 410.6L532.2 413.8L531.2 413.8z" fill="#2a93f5" stroke="none"/><path d="M531.7 441.6L531.2 438.4L532.2 438.4z" fill="#2a93f5" stroke="none"/><path d="M601.2 418.3L601.2 433.8" /><path d="M601.2 418.3L601.8 420.9L600.7 420.9z" fill="#2a93f5" stroke="none"/><path d="M601.2 433.8L600.7 431.2L601.8 431.2z" fill="#2a93f5" stroke="none"/><path d="M626.7 417.5L654.2 417.5" /><path d="M626.7 434.7L654.2 434.7" /><path d="M652.6 417.5L652.6 434.7" /><path d="M652.6 417.5L653.1 420.7L652.1 420.7z" fill="#2a93f5" stroke="none"/><path d="M652.6 434.7L652.1 431.5L653.1 431.5z" fill="#2a93f5" stroke="none"/><path d="M625 434.7L625 444.6" /><path d="M618 443.4L639.5 443.4" /><path d="M625 443.4L622.4 443.9L622.4 442.8z" fill="#2a93f5" stroke="none"/><path d="M626.7 443.4L629.3 442.8L629.3 443.9z" fill="#2a93f5" stroke="none"/><path d="M533.3 452.2L555 452.2" /><path d="M540.6 452.2L538 452.8L538 451.6z" fill="#2a93f5" stroke="none"/><path d="M542.3 452.2L544.9 451.6L544.9 452.8z" fill="#2a93f5" stroke="none"/><path d="M542.3 441.6L542.3 453.4" /><path d="M540.6 439.9L540.6 479.5" /><path d="M571.6 441.6L571.6 471" /><path d="M590.5 434.7L590.5 462.4" /><path d="M607.8 434.7L607.8 453.6" /><path d="M626.7 433L626.7 479.5" /><path d="M607.8 452.1L626.7 452.1" /><path d="M607.8 452.1L611 451.6L611 452.7z" fill="#2a93f5" stroke="none"/><path d="M626.7 452.1L623.5 452.7L623.5 451.6z" fill="#2a93f5" stroke="none"/><path d="M590.5 460.8L626.7 460.8" /><path d="M590.5 460.8L593.7 460.2L593.7 461.4z" fill="#2a93f5" stroke="none"/><path d="M626.7 460.8L623.5 461.4L623.5 460.2z" fill="#2a93f5" stroke="none"/><path d="M571.6 469.3L626.7 469.3" /><path d="M571.6 469.3L574.8 468.8L574.8 469.9z" fill="#2a93f5" stroke="none"/><path d="M626.7 469.3L623.5 469.9L623.5 468.8z" fill="#2a93f5" stroke="none"/><path d="M540.6 477.9L626.7 477.9" /><path d="M540.6 477.9L543.8 477.3L543.8 478.4z" fill="#2a93f5" stroke="none"/><path d="M626.7 477.9L623.5 478.4L623.5 477.3z" fill="#2a93f5" stroke="none"/></g><text x="617.2" y="451.2" class="dt" textLength="4.7" lengthAdjust="spacingAndGlyphs" font-size="5.3">11</text><text x="608.9" y="459.9" class="dt" textLength="4.7" lengthAdjust="spacingAndGlyphs" font-size="5.3">21</text><text x="599.3" y="468.4" class="dt" textLength="4.7" lengthAdjust="spacingAndGlyphs" font-size="5.3">32</text><text x="583.3" y="477" class="dt" textLength="4.7" lengthAdjust="spacingAndGlyphs" font-size="5.3">50</text><text x="633.7" y="442.6" class="dt" textLength="11.8" lengthAdjust="spacingAndGlyphs" font-size="5.3">1x45°</text><text x="548.8" y="451.5" class="dt" textLength="11.8" lengthAdjust="spacingAndGlyphs" font-size="5.3">1x45°</text><text transform="translate(530.8 426.1) rotate(-90)" class="dt" textLength="4.7" lengthAdjust="spacingAndGlyphs" font-size="5.3">18</text><text transform="translate(600.3 426.1) rotate(-90)" class="dt" textLength="4.7" lengthAdjust="spacingAndGlyphs" font-size="5.3">Ø9</text><text transform="translate(651.7 426.1) rotate(-90)" class="dt" textLength="7.1" lengthAdjust="spacingAndGlyphs" font-size="5.3">Ø10</text><g fill="none" stroke="#2a2a2a" stroke-width="0.8"><ellipse cx="0" cy="0" rx="9.7" ry="16.9" transform="translate(421.5 460.2) rotate(-30)" stroke-width="0.9"/><ellipse cx="0" cy="0" rx="11" ry="19" transform="translate(423 459.3) rotate(-30)" stroke-width="0.9"/><path d="M457.8 461.1L459 460.3L460 459.2L460.7 457.8L461.3 456.2L461.6 454.4L461.8 452.5L461.6 450.4L461.3 448.2L460.7 445.9L460 443.7L459 441.4L457.8 439.2L456.5 437.1L455.1 435.2L453.5 433.3L451.8 431.7L450.1 430.3L448.3 429.2L446.6 428.3L444.9 427.7L443.2 427.4L441.6 427.4L440.2 427.7L438.9 428.3" /><path d="M432.5 475.8L457.8 461.1M413.5 442.9L438.9 428.3M461.5 449.3L470 444.4M451 431L459.5 426.1M471.7 442.2L482.3 436M462.2 425.7L472.8 419.6M484.9 435.8L499.8 427.1M474.4 417.5L489.3 408.9"/><path d="M470 444.4L470.7 443.9L471.2 443.3L471.6 442.5L471.9 441.6L472.1 440.6L472.2 439.5L472.1 438.4L471.9 437.2L471.6 435.9L471.2 434.7L470.7 433.4L470 432.2L469.3 431L468.5 429.9L467.6 428.9L466.7 428L465.7 427.3L464.7 426.6L463.8 426.1L462.8 425.8L461.9 425.6L461 425.6L460.2 425.8L459.5 426.1" /><path d="M484.5 436L485.2 435.6L485.8 435L486.3 434.3L486.7 433.4L487 432.4L487.1 431.3L487.1 430.1L486.9 428.8L486.6 427.5L486.2 426.2L485.6 424.9L484.9 423.6L484.2 422.3L483.3 421.2L482.4 420.2L481.4 419.2L480.4 418.5L479.3 417.8L478.3 417.4L477.3 417.1L476.4 417L475.5 417.1L474.7 417.3L473.9 417.8" stroke-width="1.5"/><path d="M499.8 427.1L500.5 426.7L501 426L501.5 425.3L501.8 424.4L502 423.4L502 422.3L502 421.2L501.8 419.9L501.5 418.7L501 417.4L500.5 416.2L499.8 415L499.1 413.8L498.3 412.7L497.4 411.7L496.5 410.8L495.5 410L494.6 409.4L493.6 408.9L492.6 408.6L491.7 408.4L490.8 408.4L490 408.6L489.3 408.9" /><path d="M498.6 424.8L499.4 424.8L500.2 424.5L500.8 424.1L501.3 423.5L501.7 422.7L501.9 421.7L502 420.7L502 419.6L501.8 418.4L501.4 417.1L500.9 415.9L500.3 414.7L499.6 413.6L498.7 412.5L497.9 411.6L496.9 410.8L496 410.2L495 409.8L494.1 409.5L493.2 409.5L492.4 409.6L491.7 409.9L491.1 410.4L490.7 411.1" /><path d="M426.300 441.600L434.500 431.900C438 430.500 442.500 434.500 442.200 439C441.800 443 437.500 445.300 434.500 444.700C431 444.500 427 443.500 426.300 441.600z"/></g><g fill="none" stroke="#ff1e1e" stroke-width="0.9" stroke-opacity="0.85"><path d="M404.6 470L509.4 408.4" stroke-dasharray="9 2 1.5 2"/><path d="M433.2 420.4L433.2 485.7" stroke-dasharray="9 2 1.5 2"/></g><g fill="none" stroke="#2a2a2a" stroke-width="0.8"><ellipse cx="0" cy="0" rx="9.7" ry="16.9" transform="translate(851.3 425.8) rotate(-30)" stroke-width="1"/><ellipse cx="0" cy="0" rx="11" ry="19" transform="translate(852.8 424.9) rotate(-30)" /><path d="M887.6 426.7L888.8 425.9L889.8 424.8L890.5 423.4L891.1 421.8L891.4 420L891.6 418.1L891.4 416L891.1 413.8L890.5 411.5L889.8 409.3L888.8 407L887.6 404.8L886.3 402.7L884.9 400.8L883.3 398.9L881.6 397.3L879.9 395.9L878.1 394.8L876.4 393.9L874.7 393.3L873 393L871.4 393L870 393.3L868.7 393.9" /><path d="M868.7 393.9L867.5 394.7L866.5 395.8L865.7 397.2L865.2 398.8L864.8 400.6L864.7 402.6L864.8 404.6L865.2 406.8L865.7 409.1L866.5 411.3L867.5 413.6L868.7 415.8L870 417.9L871.4 419.8L873 421.7L874.7 423.3L876.4 424.7L878.1 425.8L879.9 426.7L881.6 427.3L883.3 427.6L884.9 427.6L886.3 427.3L887.6 426.7" stroke-dasharray="2.6 1.6"/><path d="M862.3 441.4L887.6 426.7M843.3 408.5L868.7 393.9M887.9 416.9L929.6 392.7M873.6 400.7L919.1 374.5"/><ellipse cx="0" cy="0" rx="6.1" ry="10.5" transform="translate(878.1 410.3) rotate(-30)" stroke-dasharray="2.6 1.6"/><ellipse cx="0" cy="0" rx="6.1" ry="10.5" transform="translate(894.5 400.8) rotate(-30)" stroke-width="1.1"/><ellipse cx="0" cy="0" rx="5.5" ry="9.5" transform="translate(894.5 400.8) rotate(-30)" stroke-dasharray="2.6 1.6"/><ellipse cx="0" cy="0" rx="6.1" ry="10.5" transform="translate(909.5 392.2) rotate(-30)" stroke-width="1.6"/><ellipse cx="0" cy="0" rx="6.1" ry="10.5" transform="translate(924.4 383.6) rotate(-30)" /><ellipse cx="0" cy="0" rx="4.9" ry="8.4" transform="translate(925.9 382.8) rotate(-30)" stroke-dasharray="2.6 1.6"/><path d="M859.2 401.1L859.2 435.1" stroke-dasharray="2.6 1.6"/><path d="M870.2 401.1L870.2 435.1" stroke-dasharray="2.6 1.6"/><ellipse cx="864.7" cy="404.1" rx="7" ry="4.2" transform="rotate(-12 864.7 404.1)" stroke-dasharray="2.6 1.6"/><ellipse cx="864.7" cy="432.1" rx="7" ry="4.2" transform="rotate(-12 864.7 432.1)" stroke-dasharray="2.6 1.6"/></g><g fill="none" stroke="#ff1e1e" stroke-width="0.9" stroke-opacity="0.85"><path d="M846.2 429.4L929.4 380.8" stroke-dasharray="9 2 1.5 2"/><path d="M834.2 416.6L866.3 435.6" stroke-dasharray="9 2 1.5 2"/><path d="M850.4 411.6L850.4 445.5" stroke-dasharray="9 2 1.5 2"/></g><rect x="302" y="227.700" width="629.100" height="431.400" fill="none" stroke="#7f7fff" stroke-width="2"/><path d="M302 279.600V606.500" stroke="#20204a" stroke-width="0.900" opacity="0.600"/></g><rect x="72" y="131.600" width="1081" height="22.900" fill="#ebebeb"/><rect x="72" y="131.600" width="23.200" height="616.400" fill="#ebebeb"/><defs><filter id="nf" x="0" y="0" width="1" height="1" filterUnits="objectBoundingBox"><feOffset dx="0" dy="0"/></filter><clipPath id="hclip"><rect x="95" y="130" width="1042" height="25"/></clipPath><clipPath id="vclip"><rect x="72" y="154.5" width="24" height="577.5"/></clipPath></defs><path d="M110.1 151.5V154.5M127.3 148V154.5M144.5 151.5V154.5M161.8 148V154.5M179 151.5V154.5M196.2 148V154.5M213.4 151.5V154.5M230.6 148V154.5M247.9 151.5V154.5M265.1 148V154.5M282.3 151.5V154.5M299.5 148V154.5M316.7 151.5V154.5M334 148V154.5M351.2 151.5V154.5M368.4 148V154.5M385.6 151.5V154.5M402.8 148V154.5M420.1 151.5V154.5M437.3 148V154.5M454.5 151.5V154.5M471.7 148V154.5M488.9 151.5V154.5M506.2 148V154.5M523.4 151.5V154.5M540.6 148V154.5M557.8 151.5V154.5M575 148V154.5M592.3 151.5V154.5M609.5 148V154.5M626.7 151.5V154.5M643.9 148V154.5M661.1 151.5V154.5M678.4 148V154.5M695.6 151.5V154.5M712.8 148V154.5M730 151.5V154.5M747.2 148V154.5M764.5 151.5V154.5M781.7 148V154.5M798.9 151.5V154.5M816.1 148V154.5M833.3 151.5V154.5M850.6 148V154.5M867.8 151.5V154.5M885 148V154.5M902.2 151.5V154.5M919.4 148V154.5M936.7 151.5V154.5M953.9 148V154.5M971.1 151.5V154.5M988.3 148V154.5M1005.5 151.5V154.5M1022.8 148V154.5M1040 151.5V154.5M1057.2 148V154.5M1074.4 151.5V154.5M1091.6 148V154.5M1108.9 151.5V154.5M1126.1 148V154.5" stroke="#555" stroke-width="0.8" fill="none"/><g clip-path="url(#hclip)" font-size="9.500" fill="#0a0a0a" stroke="#0a0a0a" stroke-width="0.180" text-anchor="middle"><text x="92.3" y="141.300">-260</text><text x="126.7" y="141.300">-240</text><text x="161.2" y="141.300">-220</text><text x="195.6" y="141.300">-200</text><text x="230" y="141.300">-180</text><text x="264.5" y="141.300">-160</text><text x="298.9" y="141.300">-140</text><text x="333.4" y="141.300">-120</text><text x="367.8" y="141.300">-100</text><text x="402.2" y="141.300">-80</text><text x="436.7" y="141.300">-60</text><text x="471.1" y="141.300">-40</text><text x="505.6" y="141.300">-20</text><text x="540" y="141.300">0</text><text x="574.4" y="141.300">20</text><text x="608.9" y="141.300">40</text><text x="643.3" y="141.300">60</text><text x="677.8" y="141.300">80</text><text x="712.2" y="141.300">100</text><text x="746.6" y="141.300">120</text><text x="781.1" y="141.300">140</text><text x="815.5" y="141.300">160</text><text x="850" y="141.300">180</text><text x="884.4" y="141.300">200</text><text x="918.8" y="141.300">220</text><text x="953.3" y="141.300">240</text><text x="987.7" y="141.300">260</text><text x="1022.2" y="141.300">280</text><text x="1056.6" y="141.300">300</text><text x="1091" y="141.300">320</text><text x="1125.5" y="141.300">340</text></g><path d="M92 718.8H95.200M88.400 701.6H95.200M92 684.4H95.200M88.400 667.2H95.200M92 649.9H95.200M88.400 632.7H95.200M92 615.5H95.200M88.400 598.3H95.200M92 581.1H95.200M88.400 563.8H95.200M92 546.6H95.200M88.400 529.4H95.200M92 512.2H95.200M88.400 495H95.200M92 477.7H95.200M88.400 460.5H95.200M92 443.3H95.200M88.400 426.1H95.200M92 408.9H95.200M88.400 391.6H95.200M92 374.4H95.200M88.400 357.2H95.200M92 340H95.200M88.400 322.8H95.200M92 305.5H95.200M88.400 288.3H95.200M92 271.1H95.200M88.400 253.9H95.200M92 236.7H95.200M88.400 219.4H95.200M92 202.2H95.200M88.400 185H95.200M92 167.8H95.200" stroke="#555" stroke-width="0.8" fill="none"/><g clip-path="url(#vclip)" font-size="9.500" fill="#0a0a0a" stroke="#0a0a0a" stroke-width="0.180" text-anchor="middle" filter="url(#nf)"><text transform="translate(81.300 736) rotate(-90)">-220</text><text transform="translate(81.300 701.6) rotate(-90)">-200</text><text transform="translate(81.300 667.2) rotate(-90)">-180</text><text transform="translate(81.300 632.7) rotate(-90)">-160</text><text transform="translate(81.300 598.3) rotate(-90)">-140</text><text transform="translate(81.300 563.8) rotate(-90)">-120</text><text transform="translate(81.300 529.4) rotate(-90)">-100</text><text transform="translate(81.300 495) rotate(-90)">-80</text><text transform="translate(81.300 460.5) rotate(-90)">-60</text><text transform="translate(81.300 426.1) rotate(-90)">-40</text><text transform="translate(81.300 391.6) rotate(-90)">-20</text><text transform="translate(81.300 357.2) rotate(-90)">0</text><text transform="translate(81.300 322.8) rotate(-90)">20</text><text transform="translate(81.300 288.3) rotate(-90)">40</text><text transform="translate(81.300 253.9) rotate(-90)">60</text><text transform="translate(81.300 219.4) rotate(-90)">80</text><text transform="translate(81.300 185) rotate(-90)">100</text><text transform="translate(81.300 150.6) rotate(-90)">120</text></g><path d="M566 144.5h10.4l-5.2 6.3z" fill="#000"/><path d="M84.900 207v12l6.300-6z" fill="#000"/><rect x="72" y="107.800" width="1081" height="24" fill="#d5d5d5"/><path d="M78.800 115.700l8.200 8.200M87 115.700l-8.200 8.200" stroke="#585858" stroke-width="1.150" fill="none"/><defs><linearGradient id="qg" x1="0" y1="0" x2="1" y2="1"><stop offset="0" stop-color="#93a4cf"/><stop offset="0.450" stop-color="#2c4591"/><stop offset="1" stop-color="#223a85"/></linearGradient></defs><circle cx="102" cy="118.800" r="5.600" fill="#f7f6f2" stroke="url(#qg)" stroke-width="2"/><path d="M99.500 120.600l3-4.800M99.200 120.300h4.500" stroke="#e06a6a" stroke-width="0.600" fill="none"/><path d="M102.600 119.600l4.400 4.400" stroke="#f2a41e" stroke-width="1.900" stroke-linecap="butt"/><circle cx="107.300" cy="124.300" r="1.100" fill="#e87474"/><text x="631.5" y="124.3" font-size="11.800" text-anchor="middle" fill="#111" stroke="#111" stroke-width="0.150">* part_05.12.dxf</text><rect x="1138" y="154.500" width="15.500" height="577.500" fill="#f6f6f6"/><rect x="1138" y="154.500" width="1" height="577.500" fill="#e6e6e6"/><rect x="1143.500" y="298" width="7.300" height="290" rx="3.600" fill="#7e7e7e"/><rect x="95.200" y="732" width="987.800" height="16" fill="#f6f6f6"/><rect x="95.200" y="732" width="987.800" height="1" fill="#e4e4e4"/><rect x="1083" y="732" width="70" height="16" fill="#e9e9e9"/><rect x="231" y="736.5" width="715.5" height="8" rx="4" fill="#7e7e7e"/><text x="1153" y="745" font-size="13" text-anchor="end" fill="#111" stroke="#111" stroke-width="0.200">10 &lt; 100</text></svg>
<!-- layers -->
<svg width="300" height="692" viewBox="1154 108 300 692" style="left:1154px;top:108px" font-family="'Liberation Sans',sans-serif"><defs><linearGradient id="ltg" x1="0" y1="0" x2="0" y2="1"><stop offset="0" stop-color="#ebebeb"/><stop offset="1" stop-color="#d9d9d9"/></linearGradient><linearGradient id="lbtn" x1="0" y1="0" x2="0" y2="1"><stop offset="0" stop-color="#ededed"/><stop offset="0.45" stop-color="#f6f6f6"/><stop offset="1" stop-color="#ebebeb"/></linearGradient></defs><rect x="1154" y="108" width="300.500" height="690.300" fill="#fff"/><rect x="1154" y="108" width="1.600" height="690.300" fill="#c6c6c6"/><rect x="1155.400" y="108" width="299.200" height="22" fill="url(#ltg)"/><rect x="1453.600" y="130" width="1" height="668.300" fill="#d0d0d0"/><circle cx="1164" cy="118" r="6.700" fill="#585858"/><path d="M1161.200 115.200l5.600 5.600M1166.800 115.200l-5.600 5.600" stroke="#f2f2f2" stroke-width="2"/><circle cx="1182" cy="118" r="6.700" fill="#585858"/><path d="M1180.600 116.600v-1.800h5v4.200h-1.600" stroke="#f2f2f2" stroke-width="1.100" fill="none"/><rect x="1178.600" y="117.300" width="4.800" height="3.800" fill="none" stroke="#f2f2f2" stroke-width="1.100"/><text x="1322.200" y="122.600" font-size="11.800" text-anchor="middle" fill="#2a2a2a" stroke="#2a2a2a" stroke-width="0.150">Lista de capas</text><rect x="1155.400" y="130" width="299" height="26" fill="#a8a8a8"/><rect x="1156.1" y="131" width="58.4" height="23.800" fill="url(#lbtn)"/><rect x="1215.9" y="131" width="58.6" height="23.800" fill="url(#lbtn)"/><rect x="1275.9" y="131" width="58.6" height="23.800" fill="url(#lbtn)"/><rect x="1335.9" y="131" width="58.6" height="23.800" fill="url(#lbtn)"/><rect x="1395.9" y="131" width="57.7" height="23.800" fill="url(#lbtn)"/><g transform="translate(1185.1 142.6) scale(1.00)"><path d="M-7.400 0.200C-6.200 -3.600 -3 -5.800 0.300 -5.800C3.600 -5.800 6.400 -3.400 7.400 -0.400C6.800 1.400 6.200 2.600 5 3.600C3.600 4.900 1.800 5.600 -0.300 5.600C-3.600 5.600 -6.200 3.600 -7.400 0.200z" fill="#000"/><path d="M-3.300 -1.300A3.400 3.400 0 1 0 3.300 -1.300" fill="none" stroke="#fff" stroke-width="1.350"/><circle cx="-0.900" cy="-1" r="0.650" fill="#fff" opacity="0.750"/></g><g transform="translate(1244.8 142.6) scale(1.00)"><path d="M-7.400 0.200C-6.200 -3.600 -3 -5.800 0.300 -5.800C3.600 -5.800 6.400 -3.400 7.400 -0.400C6.800 1.400 6.200 2.600 5 3.600C3.600 4.900 1.800 5.600 -0.300 5.600C-3.600 5.600 -6.200 3.600 -7.400 0.200z" fill="#a4a4a4"/><path d="M-3.300 -1.300A3.400 3.400 0 1 0 3.300 -1.300" fill="none" stroke="#fff" stroke-width="1.350"/><circle cx="-0.900" cy="-1" r="0.650" fill="#fff" opacity="0.750"/></g><path d="M1298.600 143.200h12.400M1304.800 137v12.400" stroke="#8a0000" stroke-width="4"/><path d="M1299 143.200h11.600M1304.800 137.400v11.600" stroke="#ff1010" stroke-width="3"/><rect x="1359" y="141.200" width="12" height="3.800" fill="#ff1010" stroke="#8a0000" stroke-width="0.500"/><g transform="translate(1417.6 150.0) rotate(-44.2)"><path d="M0 0L4 -1.600H17.9V1.600H4z" fill="#e0a030" stroke="#9a6a18" stroke-width="0.500"/><path d="M4 -0.300H17.9" stroke="#f4cc70" stroke-width="0.900"/><rect x="17.7" y="-1.700" width="2.800" height="3.400" fill="#e03030"/><path d="M0 0L4 -1.600V1.600z" fill="#d9b88a"/><path d="M0 0L1.600 -0.640V0.640z" fill="#444"/></g><rect x="1161.600" y="163.8" width="15" height="7.600" fill="#fff" stroke="#000" stroke-width="1"/><text x="1183" y="171.8" font-size="13" fill="#111" stroke="#111" stroke-width="0.220" letter-spacing="0.200">0</text><g transform="translate(1422.8 167.0) scale(1.00)"><path d="M-7.400 0.200C-6.200 -3.600 -3 -5.800 0.300 -5.800C3.600 -5.800 6.400 -3.400 7.400 -0.400C6.800 1.400 6.200 2.600 5 3.600C3.600 4.900 1.800 5.600 -0.300 5.600C-3.600 5.600 -6.200 3.600 -7.400 0.200z" fill="#000"/><path d="M-3.300 -1.300A3.400 3.400 0 1 0 3.300 -1.300" fill="none" stroke="#fff" stroke-width="1.350"/><circle cx="-0.900" cy="-1" r="0.650" fill="#fff" opacity="0.750"/></g><path d="M1441.9 166.5v-3.200a3.300 3.500 0 0 1 6.600 0v3.200" fill="none" stroke="#c8c8c8" stroke-width="1.300"/><rect x="1440.3" y="166.2" width="9.800" height="7.600" fill="#b6b6b6"/><rect x="1161.600" y="183.8" width="15" height="7.600" fill="#0a8cff" stroke="#000" stroke-width="1"/><text x="1183" y="191.8" font-size="13" fill="#111" stroke="#111" stroke-width="0.220" letter-spacing="0.200">Acotaciones</text><g transform="translate(1422.8 187.0) scale(1.00)"><path d="M-7.400 0.200C-6.200 -3.600 -3 -5.800 0.300 -5.800C3.600 -5.800 6.400 -3.400 7.400 -0.400C6.800 1.400 6.200 2.600 5 3.600C3.600 4.900 1.800 5.600 -0.300 5.600C-3.600 5.600 -6.200 3.600 -7.400 0.200z" fill="#000"/><path d="M-3.300 -1.300A3.400 3.400 0 1 0 3.300 -1.300" fill="none" stroke="#fff" stroke-width="1.350"/><circle cx="-0.900" cy="-1" r="0.650" fill="#fff" opacity="0.750"/></g><path d="M1441.9 186.5v-3.200a3.300 3.500 0 0 1 6.600 0v3.200" fill="none" stroke="#c8c8c8" stroke-width="1.300"/><rect x="1440.3" y="186.2" width="9.800" height="7.600" fill="#b6b6b6"/><rect x="1161.600" y="203.8" width="15" height="7.600" fill="#000" stroke="#000" stroke-width="1"/><text x="1183" y="211.8" font-size="13" fill="#111" stroke="#111" stroke-width="0.220" letter-spacing="0.200">Borde</text><g transform="translate(1422.8 207.0) scale(1.00)"><path d="M-7.400 0.200C-6.200 -3.600 -3 -5.800 0.300 -5.800C3.600 -5.800 6.400 -3.400 7.400 -0.400C6.800 1.400 6.200 2.600 5 3.600C3.600 4.900 1.800 5.600 -0.300 5.600C-3.600 5.600 -6.200 3.600 -7.400 0.200z" fill="#000"/><path d="M-3.300 -1.300A3.400 3.400 0 1 0 3.300 -1.300" fill="none" stroke="#fff" stroke-width="1.350"/><circle cx="-0.900" cy="-1" r="0.650" fill="#fff" opacity="0.750"/></g><path d="M1441.9 206.5v-3.200a3.300 3.500 0 0 1 6.600 0v3.200" fill="none" stroke="#c8c8c8" stroke-width="1.300"/><rect x="1440.3" y="206.2" width="9.800" height="7.600" fill="#b6b6b6"/><rect x="1161.600" y="223.8" width="15" height="7.600" fill="#ff0808" stroke="#000" stroke-width="1"/><text x="1183" y="231.8" font-size="13" fill="#111" stroke="#111" stroke-width="0.220" letter-spacing="0.200">Centro</text><g transform="translate(1422.8 227.0) scale(1.00)"><path d="M-7.400 0.200C-6.200 -3.600 -3 -5.800 0.300 -5.800C3.600 -5.800 6.400 -3.400 7.400 -0.400C6.800 1.400 6.200 2.600 5 3.600C3.600 4.900 1.800 5.600 -0.300 5.600C-3.600 5.600 -6.200 3.600 -7.400 0.200z" fill="#000"/><path d="M-3.300 -1.300A3.400 3.400 0 1 0 3.300 -1.300" fill="none" stroke="#fff" stroke-width="1.350"/><circle cx="-0.900" cy="-1" r="0.650" fill="#fff" opacity="0.750"/></g><path d="M1441.9 226.5v-3.200a3.300 3.500 0 0 1 6.600 0v3.200" fill="none" stroke="#c8c8c8" stroke-width="1.300"/><rect x="1440.3" y="226.2" width="9.800" height="7.600" fill="#b6b6b6"/><rect x="1161.600" y="243.8" width="15" height="7.600" fill="#fff" stroke="#000" stroke-width="1"/><text x="1183" y="251.8" font-size="13" fill="#111" stroke="#111" stroke-width="0.220" letter-spacing="0.200">Defpoints</text><g transform="translate(1422.8 247.0) scale(1.00)"><path d="M-7.400 0.200C-6.200 -3.600 -3 -5.800 0.300 -5.800C3.600 -5.800 6.400 -3.400 7.400 -0.400C6.800 1.400 6.200 2.600 5 3.600C3.600 4.900 1.800 5.600 -0.300 5.600C-3.600 5.600 -6.200 3.600 -7.400 0.200z" fill="#000"/><path d="M-3.300 -1.300A3.400 3.400 0 1 0 3.300 -1.300" fill="none" stroke="#fff" stroke-width="1.350"/><circle cx="-0.900" cy="-1" r="0.650" fill="#fff" opacity="0.750"/></g><path d="M1441.9 246.5v-3.200a3.300 3.500 0 0 1 6.600 0v3.200" fill="none" stroke="#c8c8c8" stroke-width="1.300"/><rect x="1440.3" y="246.2" width="9.800" height="7.600" fill="#b6b6b6"/><rect x="1161.600" y="263.8" width="15" height="7.600" fill="#000" stroke="#000" stroke-width="1"/><text x="1183" y="271.8" font-size="13" fill="#111" stroke="#111" stroke-width="0.220" letter-spacing="0.200">Delgado</text><g transform="translate(1422.8 267.0) scale(1.00)"><path d="M-7.400 0.200C-6.200 -3.600 -3 -5.800 0.300 -5.800C3.600 -5.800 6.400 -3.400 7.400 -0.400C6.800 1.400 6.200 2.600 5 3.600C3.600 4.900 1.800 5.600 -0.300 5.600C-3.600 5.600 -6.200 3.600 -7.400 0.200z" fill="#000"/><path d="M-3.300 -1.300A3.400 3.400 0 1 0 3.300 -1.300" fill="none" stroke="#fff" stroke-width="1.350"/><circle cx="-0.900" cy="-1" r="0.650" fill="#fff" opacity="0.750"/></g><path d="M1441.9 266.5v-3.200a3.300 3.500 0 0 1 6.600 0v3.200" fill="none" stroke="#c8c8c8" stroke-width="1.300"/><rect x="1440.3" y="266.2" width="9.800" height="7.600" fill="#b6b6b6"/><rect x="1161.600" y="283.8" width="15" height="7.600" fill="#000" stroke="#000" stroke-width="1"/><text x="1183" y="291.8" font-size="13" fill="#111" stroke="#111" stroke-width="0.220" letter-spacing="0.200">Invisible</text><g transform="translate(1422.8 287.0) scale(1.00)"><path d="M-7.400 0.200C-6.200 -3.600 -3 -5.800 0.300 -5.800C3.600 -5.800 6.400 -3.400 7.400 -0.400C6.800 1.400 6.200 2.600 5 3.600C3.600 4.900 1.800 5.600 -0.300 5.600C-3.600 5.600 -6.200 3.600 -7.400 0.200z" fill="#000"/><path d="M-3.300 -1.300A3.400 3.400 0 1 0 3.300 -1.300" fill="none" stroke="#fff" stroke-width="1.350"/><circle cx="-0.900" cy="-1" r="0.650" fill="#fff" opacity="0.750"/></g><path d="M1441.9 286.5v-3.200a3.300 3.500 0 0 1 6.600 0v3.200" fill="none" stroke="#c8c8c8" stroke-width="1.300"/><rect x="1440.3" y="286.2" width="9.800" height="7.600" fill="#b6b6b6"/><rect x="1161.600" y="303.8" width="15" height="7.600" fill="#000" stroke="#000" stroke-width="1"/><text x="1183" y="311.8" font-size="13" fill="#111" stroke="#111" stroke-width="0.220" letter-spacing="0.200">Título</text><g transform="translate(1422.8 307.0) scale(1.00)"><path d="M-7.400 0.200C-6.200 -3.600 -3 -5.800 0.300 -5.800C3.600 -5.800 6.400 -3.400 7.400 -0.400C6.800 1.400 6.200 2.600 5 3.600C3.600 4.900 1.800 5.600 -0.300 5.600C-3.600 5.600 -6.200 3.600 -7.400 0.200z" fill="#000"/><path d="M-3.300 -1.300A3.400 3.400 0 1 0 3.300 -1.300" fill="none" stroke="#fff" stroke-width="1.350"/><circle cx="-0.900" cy="-1" r="0.650" fill="#fff" opacity="0.750"/></g><path d="M1441.9 306.5v-3.200a3.300 3.500 0 0 1 6.600 0v3.200" fill="none" stroke="#c8c8c8" stroke-width="1.300"/><rect x="1440.3" y="306.2" width="9.800" height="7.600" fill="#b6b6b6"/><rect x="1161.600" y="323.8" width="15" height="7.600" fill="#000" stroke="#000" stroke-width="1"/><text x="1183" y="331.8" font-size="13" fill="#111" stroke="#111" stroke-width="0.220" letter-spacing="0.200">Visible</text><g transform="translate(1422.8 327.0) scale(1.00)"><path d="M-7.400 0.200C-6.200 -3.600 -3 -5.800 0.300 -5.800C3.600 -5.800 6.400 -3.400 7.400 -0.400C6.800 1.400 6.200 2.600 5 3.600C3.600 4.900 1.800 5.600 -0.300 5.600C-3.600 5.600 -6.200 3.600 -7.400 0.200z" fill="#000"/><path d="M-3.300 -1.300A3.400 3.400 0 1 0 3.300 -1.300" fill="none" stroke="#fff" stroke-width="1.350"/><circle cx="-0.900" cy="-1" r="0.650" fill="#fff" opacity="0.750"/></g><path d="M1441.9 326.5v-3.200a3.300 3.500 0 0 1 6.600 0v3.200" fill="none" stroke="#c8c8c8" stroke-width="1.300"/><rect x="1440.3" y="326.2" width="9.800" height="7.600" fill="#b6b6b6"/><g transform="translate(1394.2 173.6) rotate(-43.3)"><path d="M0 0L4 -1.600H16.4V1.600H4z" fill="#e0a030" stroke="#9a6a18" stroke-width="0.500"/><path d="M4 -0.300H16.4" stroke="#f4cc70" stroke-width="0.900"/><rect x="16.2" y="-1.700" width="2.800" height="3.400" fill="#e03030"/><path d="M0 0L4 -1.600V1.600z" fill="#d9b88a"/><path d="M0 0L1.600 -0.640V0.640z" fill="#444"/></g></svg>
<!-- righttools -->
<svg width="46" height="692" viewBox="1454.600 108 46 692" style="left:1454.600px;top:108px" font-family="'Liberation Sans',sans-serif"><defs><linearGradient id="rpg" x1="0" y1="0" x2="1" y2="0"><stop offset="0" stop-color="#ebebeb"/><stop offset="0.350" stop-color="#dcdcdc"/><stop offset="0.850" stop-color="#c4c4c4"/><stop offset="1" stop-color="#b9b9b9"/></linearGradient></defs><rect x="1454.600" y="108" width="46" height="690.300" fill="url(#rpg)"/><rect x="1462.3" y="116.400" width="1.400" height="1.400" fill="#9e9e9e"/><rect x="1468.2" y="116.400" width="1.400" height="1.400" fill="#9e9e9e"/><rect x="1474.3" y="116.400" width="1.400" height="1.400" fill="#9e9e9e"/><rect x="1480.3" y="116.400" width="1.400" height="1.400" fill="#9e9e9e"/><rect x="1486.4" y="116.400" width="1.400" height="1.400" fill="#9e9e9e"/><rect x="1456.200" y="120.300" width="50" height="42.400" rx="5" fill="#b9b9b9"/><rect x="1456.200" y="417" width="50" height="43" rx="5" fill="#b9b9b9"/><path d="M1456 261.5H1500" stroke="#6a6a6a" stroke-width="1" stroke-dasharray="1 2"/><path d="M1456 409.6H1500" stroke="#6a6a6a" stroke-width="1" stroke-dasharray="1 2"/><rect x="1463.700" y="127.8" width="26.600" height="26.700" fill="#fff" stroke="#3c3c3c" stroke-width="0.900"/><rect x="1463.200" y="127.3" width="27.600" height="4.600" fill="#000"/><rect x="1464.300" y="128.2" width="3.200" height="3" fill="#fff"/><path d="M1470.400 140.400l8.500-3.300v8.500l-8.500 3.300z" fill="#d9d9d9" stroke="#555" stroke-width="0.700"/><path d="M1472 141.400l8.500-3.300v8.500l-8.500 3.300z" fill="#e9e9e9" stroke="#555" stroke-width="0.700"/><path d="M1474 142.200l9-3.500v9l-9 3.500z" fill="#fff" stroke="#555" stroke-width="0.700"/><path d="M1476.500 148l4.500-7M1477 146.500l4.500-1.500" stroke="#ff3030" stroke-width="0.800"/><rect x="1463.700" y="174.7" width="26.600" height="26.700" fill="#fff" stroke="#3c3c3c" stroke-width="0.900"/><rect x="1463.200" y="174.2" width="27.600" height="4.600" fill="#000"/><rect x="1464.300" y="175.1" width="3.200" height="3" fill="#fff"/><rect x="1470.400" y="184.500" width="10.500" height="7.600" fill="#f6efd0" stroke="#9a9a8a" stroke-width="0.800"/><circle cx="1479.200" cy="191.500" r="4.200" fill="#f6efd0" fill-opacity="0.900" stroke="#9a9a8a" stroke-width="0.800"/><rect x="1463.700" y="220.5" width="26.600" height="26.700" fill="#fff" stroke="#3c3c3c" stroke-width="0.900"/><rect x="1463.200" y="220.0" width="27.600" height="4.600" fill="#000"/><rect x="1464.300" y="220.9" width="3.200" height="3" fill="#fff"/><rect x="1468.200" y="229.600" width="17.200" height="11.600" rx="2" fill="#eef1f6" stroke="#c4d0e4" stroke-width="0.900"/><rect x="1463.700" y="277.1" width="26.600" height="26.700" fill="#fff" stroke="#3c3c3c" stroke-width="0.900"/><rect x="1463.200" y="276.6" width="27.600" height="4.600" fill="#000"/><rect x="1464.300" y="277.5" width="3.200" height="3" fill="#fff"/><rect x="1466.200" y="284.2" width="3.800" height="2.600" fill="#000"/><rect x="1473" y="284.2" width="14.400" height="2.600" fill="#fff" stroke="#444" stroke-width="0.700"/><rect x="1466.200" y="290.0" width="3.800" height="2.600" fill="#000"/><rect x="1473" y="290.0" width="14.400" height="2.600" fill="#fff" stroke="#444" stroke-width="0.700"/><rect x="1466.200" y="295.8" width="3.800" height="2.600" fill="#000"/><rect x="1473" y="295.8" width="14.400" height="2.600" fill="#fff" stroke="#444" stroke-width="0.700"/><rect x="1463.700" y="322.7" width="26.600" height="26.700" fill="#fff" stroke="#3c3c3c" stroke-width="0.900"/><rect x="1463.200" y="322.2" width="27.600" height="4.600" fill="#000"/><rect x="1464.300" y="323.1" width="3.200" height="3" fill="#fff"/><path d="M1469.200 332.200c3-1.600 13-1.600 15.800 0l-5.800 6.800v7.800l-3.600-1.600v-6.200z" fill="#c4c4c4" stroke="#707070" stroke-width="0.700"/><ellipse cx="1477.100" cy="332.300" rx="7.900" ry="1.500" fill="#e9e9e9" stroke="#707070" stroke-width="0.600"/><rect x="1463.700" y="368.6" width="26.600" height="26.700" fill="#fff" stroke="#3c3c3c" stroke-width="0.900"/><rect x="1463.200" y="368.1" width="27.600" height="4.600" fill="#000"/><rect x="1464.300" y="369.0" width="3.200" height="3" fill="#fff"/><path d="M1465.500 384.200h22.500" stroke="#ffb0b0" stroke-width="0.800"/><path d="M1469.200 377.800l5.800 3v6.800l-5.800 3z" fill="#f4f4f4" stroke="#444" stroke-width="0.700"/><rect x="1475" y="380.800" width="9.600" height="6.800" fill="#9a9a9a" stroke="#666" stroke-width="0.600"/><rect x="1463.700" y="424.9" width="26.600" height="26.700" fill="#fff" stroke="#3c3c3c" stroke-width="0.900"/><rect x="1463.200" y="424.4" width="27.600" height="4.600" fill="#000"/><rect x="1464.300" y="425.3" width="3.200" height="3" fill="#fff"/><rect x="1466" y="432.8" width="11.0" height="1.200" fill="#9a9a9a"/><rect x="1466" y="436.1" width="13.0" height="1.200" fill="#9a9a9a"/><rect x="1466" y="439.4" width="11.0" height="1.200" fill="#9a9a9a"/><rect x="1466" y="442.7" width="13.0" height="1.200" fill="#9a9a9a"/><path d="M1463.700 446.800h26.600" stroke="#222" stroke-width="0.800"/><text x="1472.500" y="450.800" font-size="3.600" fill="#222">command</text><path d="M1466 448.300l-1 1 1 1" stroke="#222" stroke-width="0.500" fill="none"/><rect x="1463.700" y="471.8" width="26.600" height="26.700" fill="#fff" stroke="#3c3c3c" stroke-width="0.900"/><rect x="1463.200" y="471.3" width="27.600" height="4.600" fill="#000"/><rect x="1464.300" y="472.2" width="3.200" height="3" fill="#fff"/><rect x="1470.700" y="480.500" width="12.800" height="13.600" rx="0.800" fill="#c98a2e" stroke="#9a6417" stroke-width="0.600"/><rect x="1472" y="481.800" width="10.200" height="11" fill="#f4f4f2"/><path d="M1473.500 485h7M1473.500 487.200h7M1473.500 489.400h5" stroke="#c6c6c2" stroke-width="0.700"/><rect x="1474.500" y="479.300" width="5.200" height="2.600" rx="0.600" fill="#9c9c94" stroke="#74746c" stroke-width="0.400"/><path d="M1479.400 492.800l2.800-2.800v2.800z" fill="#b4b4b0"/></svg>
<!-- cmd -->
<svg width="1083" height="52" viewBox="72 747 1083 52" style="left:72px;top:747px" font-family="'Liberation Sans',sans-serif"><rect x="72" y="747.800" width="1082" height="50.500" fill="#ececec"/><rect x="72.500" y="749" width="1080.800" height="21.400" fill="#fff" stroke="#c2c2c2" stroke-width="1"/><text x="77" y="761.900" font-size="13" fill="#0808d4" stroke="#0808d4" stroke-width="0.150" letter-spacing="0.180"><tspan font-style="italic">Comando:</tspan> drawingpreferences</text><text x="73.200" y="790" font-size="13.400" fill="#111" stroke="#111" stroke-width="0.200" textLength="60" lengthAdjust="spacingAndGlyphs">Comando:</text><rect x="137.900" y="776.600" width="989" height="17" fill="#fff"/><rect x="1127.700" y="772.700" width="25.200" height="24.800" fill="#f5f5f5" stroke="#b4b4b4" stroke-width="1"/><rect x="1133.600" y="780.300" width="12.800" height="9.600" fill="#fff" stroke="#111" stroke-width="0.900"/><rect x="1133.200" y="779.800" width="13.600" height="3" fill="#000"/></svg>
<!-- status -->
<svg width="1500" height="46" viewBox="0 798 1500 46" style="left:0;top:798px" font-family="'Liberation Sans',sans-serif"><rect x="0" y="798.200" width="1500" height="46" fill="#dcdcdc"/><g font-size="10" fill="#161616" letter-spacing="0.050"><text x="2.200" y="815.500">17.706,83.876</text><text x="2.200" y="835.500" textLength="72.600" lengthAdjust="spacingAndGlyphs">@17.706,83.876</text><text x="256.400" y="815.500">85.7244&lt;78°</text><text x="256.400" y="835.500" textLength="67" lengthAdjust="spacingAndGlyphs">@85.7244&lt;78°</text><text x="949.300" y="825.300" textLength="149" lengthAdjust="spacingAndGlyphs">No hay entidades seleccionadas.</text></g><rect x="253" y="801" width="1" height="43" fill="#7a7a7a"/><circle cx="509.3" cy="822" r="2.600" fill="#c6c6c6"/><circle cx="942.4" cy="822" r="2.600" fill="#c6c6c6"/><circle cx="1272.3" cy="822" r="2.600" fill="#c6c6c6"/><rect x="719" y="806.700" width="15.200" height="28.600" rx="7.400" fill="#fff" stroke="#333" stroke-width="1"/><path d="M719 818.500h15.200M726.600 806.700v4" stroke="#333" stroke-width="0.900"/><rect x="724.700" y="809.600" width="3.800" height="8" rx="1.900" fill="#fff" stroke="#333" stroke-width="0.900"/></svg>
<!-- overlay -->
<svg width="120" height="120" viewBox="280 30 120 120" style="left:280px;top:30px"><defs><radialGradient id="ring" cx="0.5" cy="0.5" r="0.5"><stop offset="0" stop-color="#fff" stop-opacity="0.080"/><stop offset="0.720" stop-color="#fff" stop-opacity="0.160"/><stop offset="0.770" stop-color="#9db6cf" stop-opacity="0.200"/><stop offset="0.860" stop-color="#86a5c4" stop-opacity="0.320"/><stop offset="0.960" stop-color="#86a5c4" stop-opacity="0.340"/><stop offset="1" stop-color="#86a5c4" stop-opacity="0"/></radialGradient></defs><circle cx="339.300" cy="88" r="39" fill="url(#ring)"/><path transform="translate(339 87.800) scale(1.330)" d="M0 0V16.500L3.800 12.900L7 20.300L10 19L6.900 11.800L11.800 11.500z" fill="#fff" stroke="#fff" stroke-width="2.300" stroke-linejoin="round"/><path transform="translate(339 87.800) scale(1.330)" d="M0 0V16.500L3.800 12.900L7 20.300L10 19L6.900 11.800L11.800 11.500z" fill="#fff" stroke="#000" stroke-width="1.050" stroke-linejoin="miter"/></svg>
</body></html>
